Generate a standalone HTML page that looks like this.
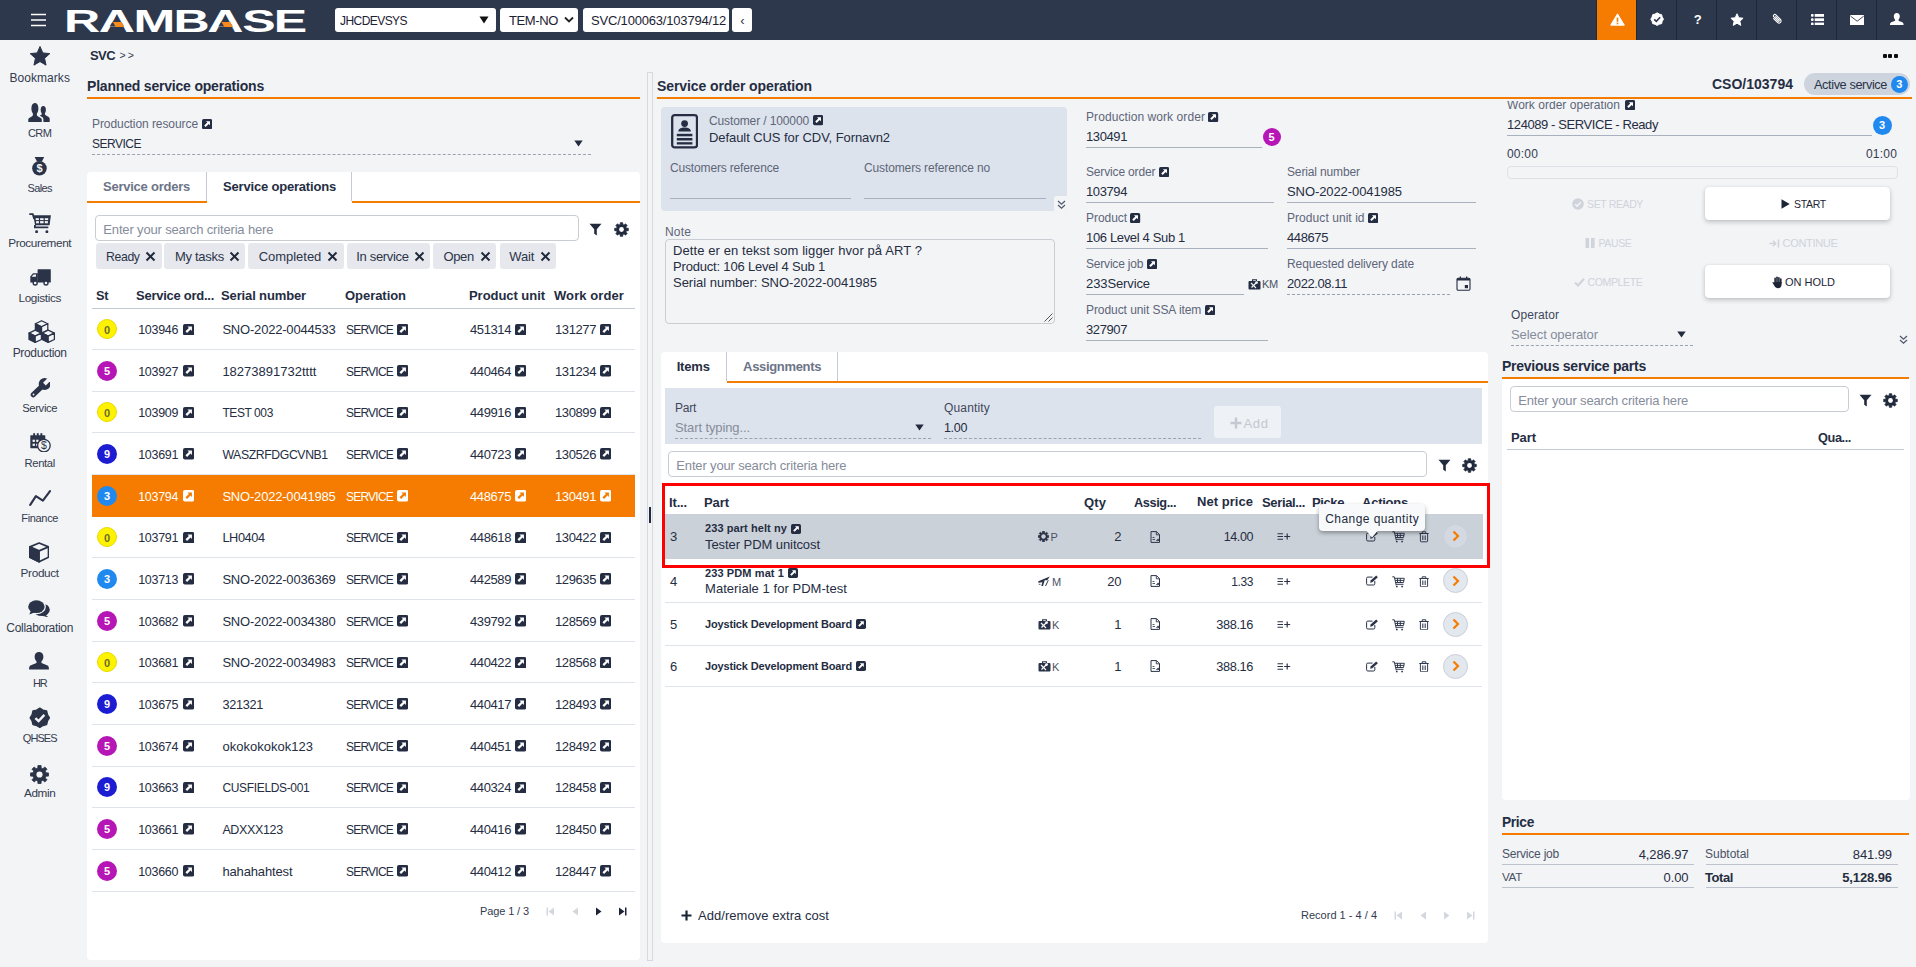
<!DOCTYPE html>
<html lang="en"><head><meta charset="utf-8"><title>RamBase - Service order operation</title>
<style>
html,body{margin:0;padding:0;}
body{width:1916px;height:967px;overflow:hidden;background:#f3f4f6;font-family:"Liberation Sans",sans-serif;position:relative;}
.b{position:absolute;display:block;}
.t{position:absolute;white-space:nowrap;}
.bd{text-align:center;font-weight:700;box-sizing:border-box;}
</style></head><body>
<div class="b " style="left:0px;top:0px;width:1916px;height:40px;background:#2e384d;"></div>
<svg class="b" style="left:30px;top:12px;" width="17" height="16" viewBox="0 0 17 16"><path d="M1 2.5H16M1 8H16M1 13.5H16" stroke="#fff" stroke-width="1.6" fill="none"/></svg>
<svg class="b" style="left:60px;top:0px;overflow:visible;" width="260" height="40" viewBox="0 0 260 40"><text transform="scale(1.645,1)" x="2.38 23.55 44.73 68.97 89.60 110.76 129.96" y="31.6" font-family="Liberation Sans, sans-serif" font-weight="700" font-size="30.5" fill="#fff">RAMBASE</text><polygon points="51.76,22.82 61.92,22.82 63.98,26.60 49.70,26.60" fill="#2e384d"/><polygon points="52.92,21.90 61.52,21.90 64.30,27.00 55.70,27.00" fill="#f78a1d"/><polygon points="160.41,22.82 170.57,22.82 172.63,26.60 158.35,26.60" fill="#2e384d"/><polygon points="161.57,21.90 170.17,21.90 172.95,27.00 164.35,27.00" fill="#f78a1d"/></svg>
<div class="b " style="left:335px;top:8px;width:160.5px;height:24px;background:#fff;border-radius:3px;"></div>
<div class="t " style="left:340.00px;top:12.000px;font-size:12px;line-height:18px;color:#1c2233;letter-spacing:-0.558px;">JHCDEVSYS</div>
<svg class="b" style="left:479px;top:16px;" width="10" height="8" viewBox="0 0 10 8"><path d="M0.5 0.5H9.5L5 7.5Z" fill="#111"/></svg>
<div class="b " style="left:499.5px;top:8px;width:78.5px;height:24px;background:#fff;border-radius:3px;"></div>
<div class="t " style="left:509.00px;top:11.000px;font-size:13px;line-height:19px;color:#1c2233;letter-spacing:-0.379px;">TEM-NO</div>
<svg class="b" style="left:564px;top:16px;" width="10" height="8" viewBox="0 0 10 8"><path d="M1 1.5L5 5.5L9 1.5" stroke="#222" stroke-width="1.8" fill="none"/></svg>
<div class="b " style="left:582.5px;top:8px;width:146px;height:24px;background:#fff;border-radius:3px;overflow:hidden;"></div>
<div class="t " style="left:591.00px;top:11.000px;font-size:13px;line-height:19px;color:#1c2233;letter-spacing:-0.189px;">SVC/100063/103794/12</div>
<div class="b " style="left:732.3px;top:8px;width:19.7px;height:24px;background:#fff;border-radius:3px;"></div>
<div class="t " style="left:740.19px;top:11.000px;font-size:13px;line-height:19px;color:#333;letter-spacing:-0.100px;">‹</div>
<div class="b " style="left:1596px;top:0px;width:1px;height:40px;background:#232a3b;"></div>
<div class="b " style="left:1597px;top:0px;width:39px;height:40px;background:#f57c00;"></div>
<div class="b " style="left:1636px;top:0px;width:1px;height:40px;background:#1f2637;"></div>
<div class="b " style="left:1676px;top:0px;width:1px;height:40px;background:#1f2637;"></div>
<div class="b " style="left:1716px;top:0px;width:1px;height:40px;background:#1f2637;"></div>
<div class="b " style="left:1756px;top:0px;width:1px;height:40px;background:#1f2637;"></div>
<div class="b " style="left:1796px;top:0px;width:1px;height:40px;background:#1f2637;"></div>
<div class="b " style="left:1836px;top:0px;width:1px;height:40px;background:#1f2637;"></div>
<div class="b " style="left:1876px;top:0px;width:1px;height:40px;background:#1f2637;"></div>
<svg class="b" style="left:1609.5px;top:12.5px;" width="15" height="13" viewBox="0 0 15 13"><path d="M7.500 1.300L14 12H1Z" fill="#fff" stroke="#fff" stroke-width="1.400" stroke-linejoin="round"/><rect x="6.700" y="4.600" width="1.600" height="4.200" fill="#f57c00"/><rect x="6.700" y="9.700" width="1.600" height="1.600" fill="#f57c00"/></svg>
<svg class="b" style="left:1649.9px;top:11.8px;" width="14.3" height="14.3" viewBox="0 0 18 18"><polygon points="9.00,1.00 11.64,2.63 14.66,3.34 15.37,6.36 17.00,9.00 15.37,11.64 14.66,14.66 11.64,15.37 9.00,17.00 6.36,15.37 3.34,14.66 2.63,11.64 1.00,9.00 2.63,6.36 3.34,3.34 6.36,2.63" fill="#fff" stroke="#fff" stroke-width="1.200" stroke-linejoin="round"/><path d="M5.300 9.200L8 11.800L12.800 6.600" stroke="#2e384d" stroke-width="2" fill="none"/></svg>
<div class="t " style="left:1693.73px;top:10.000px;font-size:13px;line-height:19px;color:#fff;letter-spacing:0.000px;font-weight:700;">?</div>
<svg class="b" style="left:1730px;top:12.8px;" width="14" height="13" viewBox="0 0 14 13"><polygon points="7.00,0.80 8.76,4.77 13.09,5.22 9.85,8.13 10.76,12.38 7.00,10.20 3.24,12.38 4.15,8.13 0.91,5.22 5.24,4.77" fill="#fff" stroke="#fff" stroke-width="1" stroke-linejoin="round"/></svg>
<svg class="b" style="left:1770.3px;top:12.4px;" width="14" height="14" viewBox="0 0 14 14"><g transform="rotate(-45 7 7)"><path d="M4.900 4.300V9.800a2.100 2.100 0 0 0 4.200 0V3.300a1.400 1.400 0 0 0-2.800 0V9.300a0.700 0.700 0 0 0 1.400 0V4.300" stroke="#fff" stroke-width="1.100" fill="none" stroke-linecap="round"/></g></svg>
<svg class="b" style="left:1810.6px;top:13.7px;" width="13.6" height="11.4" viewBox="0 0 13.6 11.4"><g fill="#fff"><rect x="0" y="0" width="2.600" height="2.800" rx="0.800"/><rect x="3.700" y="0" width="9.800" height="2.800"/><rect x="0" y="4.300" width="2.600" height="2.800" rx="0.800"/><rect x="3.700" y="4.300" width="9.800" height="2.800"/><rect x="0" y="8.600" width="2.600" height="2.800" rx="0.800"/><rect x="3.700" y="8.600" width="9.800" height="2.800"/></g></svg>
<svg class="b" style="left:1849.9px;top:14.8px;" width="14.3" height="10.2" viewBox="0 0 14.3 10.2"><rect x="0" y="0" width="14.300" height="10.200" rx="0.900" fill="#fff"/><path d="M0.600 1.200L7.150 6.200L13.700 1.200" stroke="#2e384d" stroke-width="0.900" fill="none"/></svg>
<svg class="b" style="left:1890.4px;top:12.9px;" width="13.6" height="12.4" viewBox="1.300 1.800 15.400 14"><path d="M9 1.8c2.2 0 3.4 1.6 3.4 3.8 0 1.6-.7 3-1.5 3.7v1c0 .5 3.8 1.5 5 2.4.6.5.8 1.400.8 3.100H1.300c0-1.700.2-2.600.8-3.100 1.200-.9 5-1.900 5-2.400v-1C6.300 8.600 5.600 7.200 5.600 5.600 5.600 3.400 6.800 1.800 9 1.800Z" fill="#fff"/></svg>
<div class="b " style="left:0px;top:40px;width:80px;height:927px;background:#f3f4f6;"></div>
<div class="t " style="left:9.45px;top:69.000px;font-size:12px;line-height:18px;color:#333b4f;letter-spacing:0.053px;">Bookmarks</div>
<div class="t " style="left:27.95px;top:125.000px;font-size:11px;line-height:16px;color:#333b4f;letter-spacing:-0.517px;">CRM</div>
<div class="t " style="left:27.40px;top:180.000px;font-size:11px;line-height:16px;color:#333b4f;letter-spacing:-0.583px;">Sales</div>
<div class="t " style="left:8.20px;top:234.000px;font-size:11.75px;line-height:17px;color:#333b4f;letter-spacing:-0.388px;">Procurement</div>
<div class="t " style="left:18.50px;top:289.000px;font-size:11.75px;line-height:17px;color:#333b4f;letter-spacing:-0.368px;">Logistics</div>
<div class="t " style="left:12.70px;top:344.000px;font-size:12px;line-height:18px;color:#333b4f;letter-spacing:-0.337px;">Production</div>
<div class="t " style="left:22.20px;top:400.000px;font-size:11.25px;line-height:16px;color:#333b4f;letter-spacing:-0.359px;">Service</div>
<div class="t " style="left:24.55px;top:455.000px;font-size:11.25px;line-height:16px;color:#333b4f;letter-spacing:-0.370px;">Rental</div>
<div class="t " style="left:21.30px;top:510.000px;font-size:11px;line-height:16px;color:#333b4f;letter-spacing:-0.334px;">Finance</div>
<div class="t " style="left:20.60px;top:564.000px;font-size:11.75px;line-height:17px;color:#333b4f;letter-spacing:-0.328px;">Product</div>
<div class="t " style="left:6.30px;top:619.000px;font-size:12px;line-height:18px;color:#333b4f;letter-spacing:-0.301px;">Collaboration</div>
<div class="t " style="left:32.90px;top:675.000px;font-size:11px;line-height:16px;color:#333b4f;letter-spacing:-1.144px;">HR</div>
<div class="t " style="left:22.80px;top:730.000px;font-size:11px;line-height:16px;color:#333b4f;letter-spacing:-0.942px;">QHSES</div>
<div class="t " style="left:24.00px;top:784.000px;font-size:11.75px;line-height:17px;color:#333b4f;letter-spacing:-0.381px;">Admin</div>
<svg class="b" style="left:27.5px;top:45px;" width="24" height="22" viewBox="0 0 24 22"><polygon points="12.00,1.50 14.82,7.92 21.80,8.62 16.57,13.28 18.05,20.13 12.00,16.60 5.95,20.13 7.43,13.28 2.20,8.62 9.18,7.92" fill="#2a3348" stroke="#2a3348" stroke-width="1" stroke-linejoin="round"/></svg>
<svg class="b" style="left:28.4px;top:102.5px;" width="22.2" height="19.6" viewBox="0 0 22.2 19.6"><g fill="#2a3348"><path d="M15.4 19.5V16C15.4 14.4 13.2 13.4 11.6 12.6 12.6 12.2 13.6 11.8 13.7 11.200V10.200C13 9.400 12.700 8.200 12.700 6.800 12.700 4.500 13.600 3 15.300 3 17 3 17.900 4.500 17.900 6.800 17.900 8.200 17.600 9.400 16.900 10.200V11.200C17.200 12.400 21.700 13.600 21.700 15.800V19.500Z"/><path d="M0.300 19.500V16.200C0.300 14.600 4.600 13.600 4.900 12.200V10.600C3.900 9.600 3.400 7.600 3.400 5.600 3.400 2.400 4.600 0 6.900 0 9.200 0 10.400 2.400 10.400 5.600 10.400 7.600 9.900 9.600 8.900 10.600V12.200C9.200 13.600 13.800 14.600 13.800 16.200V19.500Z"/></g></svg>
<svg class="b" style="left:32.2px;top:157.4px;" width="15" height="18.8" viewBox="0 0 15 18.8"><path d="M2.600 0.100H12.200L9.900 4.600H5Z" fill="#2a3348"/><circle cx="7.450" cy="11.300" r="7.300" fill="#2a3348"/><text x="7.450" y="15.300" text-anchor="middle" font-family="Liberation Sans, sans-serif" font-weight="700" font-size="11" fill="#f3f4f6">$</text></svg>
<svg class="b" style="left:28.6px;top:212.7px;" width="22.2" height="20.4" viewBox="0 0 22.2 20.4"><path d="M0.300 1.200H3.800L5.200 6" stroke="#2a3348" stroke-width="1.800" fill="none"/><path d="M4.200 2.300H21.900L20.600 12.300H6.100Z" fill="#2a3348"/><path d="M5.900 12V14.300H19.300" stroke="#2a3348" stroke-width="1.800" fill="none"/><g fill="#f3f4f6"><rect x="6.700" y="5.200" width="3.200" height="1.900"/><rect x="11.100" y="5.200" width="3.500" height="1.900"/><rect x="15.800" y="5.200" width="3.400" height="1.900"/><rect x="7.100" y="8.100" width="2.800" height="2.200"/><rect x="11.100" y="8.100" width="3.500" height="2.200"/><rect x="15.800" y="8.100" width="3.100" height="2.200"/></g><circle cx="7.600" cy="18.800" r="1.450" fill="#2a3348"/><circle cx="17.900" cy="18.800" r="1.450" fill="#2a3348"/></svg>
<svg class="b" style="left:29.6px;top:269px;" width="21.4" height="17" viewBox="0 0 21.4 17"><g fill="#2a3348"><rect x="7.600" y="0.200" width="13.200" height="13.300" rx="0.600"/><path d="M0.300 13.500V7.600L3 4.300H7.800V13.500Z"/><circle cx="5.200" cy="14" r="2.700"/><circle cx="16" cy="14" r="2.700"/></g><circle cx="5.200" cy="14" r="1.300" fill="#f3f4f6"/><circle cx="16" cy="14" r="1.300" fill="#f3f4f6"/><path d="M1.600 7.800L3.600 5.400H6V7.800Z" fill="#f3f4f6"/></svg>
<svg class="b" style="left:28.4px;top:320.4px;" width="27.4" height="23" viewBox="0 0 27.4 23"><path d="M13.6 0.748 L19.8 3.724 L13.6 6.7 L7.4 3.724Z" fill="#f3f4f6" stroke="#2a3348" stroke-width="1.250" stroke-linejoin="round"/><path d="M7.4 3.724 L13.6 6.7 L13.6 13.024 L7.4 10.048Z" fill="#2a3348" stroke="#2a3348" stroke-width="1.250" stroke-linejoin="round"/><path d="M19.8 3.724 L13.6 6.7 L13.6 13.024 L19.8 10.048Z" fill="#f3f4f6" stroke="#2a3348" stroke-width="1.250" stroke-linejoin="round"/><path d="M7.2 10.148 L13.4 13.124 L7.2 16.1 L1 13.124Z" fill="#f3f4f6" stroke="#2a3348" stroke-width="1.250" stroke-linejoin="round"/><path d="M1 13.124 L7.2 16.1 L7.2 22.424 L1 19.448Z" fill="#2a3348" stroke="#2a3348" stroke-width="1.250" stroke-linejoin="round"/><path d="M13.4 13.124 L7.2 16.1 L7.2 22.424 L13.4 19.448Z" fill="#f3f4f6" stroke="#2a3348" stroke-width="1.250" stroke-linejoin="round"/><path d="M20.2 10.148 L26.4 13.124 L20.2 16.1 L14 13.124Z" fill="#f3f4f6" stroke="#2a3348" stroke-width="1.250" stroke-linejoin="round"/><path d="M14 13.124 L20.2 16.1 L20.2 22.424 L14 19.448Z" fill="#2a3348" stroke="#2a3348" stroke-width="1.250" stroke-linejoin="round"/><path d="M26.4 13.124 L20.2 16.1 L20.2 22.424 L26.4 19.448Z" fill="#f3f4f6" stroke="#2a3348" stroke-width="1.250" stroke-linejoin="round"/></svg>
<svg class="b" style="left:29.6px;top:378px;" width="20.6" height="20" viewBox="0 0 20.6 20"><line x1="3.300" y1="16.700" x2="12.800" y2="7.700" stroke="#2a3348" stroke-width="5.200" stroke-linecap="round"/><circle cx="14.600" cy="6" r="5.900" fill="#2a3348"/><polygon points="13.050,4.670 15.830,7.450 20.990,2.290 18.210,-0.490" fill="#f3f4f6"/><circle cx="3.500" cy="16.500" r="0.900" fill="#f3f4f6"/></svg>
<svg class="b" style="left:29.6px;top:432.7px;" width="21" height="19.6" viewBox="0 0 21 19.6"><g fill="#2a3348"><rect x="0.300" y="2.200" width="15" height="13" rx="0.600"/><rect x="3.200" y="0.200" width="1.900" height="3.500"/><rect x="6.800" y="0.200" width="1.900" height="3.500"/><rect x="10.400" y="0.200" width="1.900" height="3.500"/></g><g fill="#f3f4f6"><rect x="2.600" y="6.700" width="2.300" height="2.200"/><rect x="6.200" y="6.700" width="2.300" height="2.200"/><rect x="2.600" y="10.700" width="2.300" height="2.200"/><rect x="6.200" y="10.700" width="2.300" height="2.200"/></g><circle cx="13.900" cy="12.600" r="6.300" fill="#f3f4f6" stroke="#2a3348" stroke-width="1.300"/><text x="13.900" y="16.300" text-anchor="middle" font-family="Liberation Sans, sans-serif" font-size="10.500" fill="#2a3348">$</text></svg>
<svg class="b" style="left:28.5px;top:490.2px;" width="22" height="16" viewBox="0 0 22 16"><path d="M1.200 14.900L6.900 6.100L13.900 10.700L21 1.100" stroke="#2a3348" stroke-width="2.100" fill="none" stroke-linecap="round" stroke-linejoin="round"/></svg>
<svg class="b" style="left:28.6px;top:542.4px;" width="20.4" height="20.8" viewBox="0 0 20.4 20.8"><path d="M10.100 1L19.500 4.900V15.200L10.100 19.800L0.900 15.200V4.900Z" fill="#f3f4f6" stroke="#2a3348" stroke-width="1.700" stroke-linejoin="round"/><path d="M0.900 4.900L10.100 8.900V19.800L0.900 15.200Z" fill="#2a3348" stroke="#2a3348" stroke-width="1.700" stroke-linejoin="round"/><path d="M10.100 8.900L19.500 4.900" stroke="#2a3348" stroke-width="1.700"/></svg>
<svg class="b" style="left:28.4px;top:599.5px;" width="22" height="17.8" viewBox="0 0 22 17.8"><g fill="#2a3348"><ellipse cx="13.700" cy="9.700" rx="8.100" ry="6.300"/><path d="M17 14.500L20.800 17.500L14.300 15.800Z"/></g><ellipse cx="8.400" cy="6.700" rx="9.500" ry="7.600" fill="#f3f4f6"/><g fill="#2a3348"><ellipse cx="8.400" cy="6.700" rx="8.200" ry="6.400"/><path d="M3 10.500L1.300 14.500L7 12.300Z"/></g></svg>
<svg class="b" style="left:29px;top:652px;" width="21.6" height="19.8" viewBox="0 0 21.6 19.8"><path transform="translate(-1.600,-2.300) scale(1.290,1.260)" d="M9 1.8c2.2 0 3.4 1.6 3.4 3.8 0 1.6-.7 3-1.5 3.7v1c0 .5 3.8 1.5 5 2.4.6.5.8 1.400.8 3.100H1.300c0-1.700.2-2.600.8-3.100 1.200-.9 5-1.900 5-2.400v-1C6.300 8.600 5.600 7.200 5.600 5.600 5.600 3.400 6.800 1.800 9 1.800Z" fill="#2a3348"/></svg>
<svg class="b" style="left:28.7px;top:706.8px;" width="21.6" height="21.6" viewBox="0 0 21.6 21.6"><g transform="scale(1.2)"><polygon points="9.00,1.00 11.64,2.63 14.66,3.34 15.37,6.36 17.00,9.00 15.37,11.64 14.66,14.66 11.64,15.37 9.00,17.00 6.36,15.37 3.34,14.66 2.63,11.64 1.00,9.00 2.63,6.36 3.34,3.34 6.36,2.63" fill="#2a3348" stroke="#2a3348" stroke-width="1.200" stroke-linejoin="round"/><path d="M5.300 9.200L8 11.800L12.800 6.600" stroke="#f3f4f6" stroke-width="2" fill="none"/></g></svg>
<svg class="b" style="left:30px;top:764.5px;" width="19" height="19" viewBox="0 0 19 19"><polygon points="7.92,0.44 11.08,0.44 11.17,3.01 12.91,3.73 14.79,1.97 17.03,4.21 15.27,6.09 15.99,7.83 18.56,7.92 18.56,11.08 15.99,11.17 15.27,12.91 17.03,14.79 14.79,17.03 12.91,15.27 11.17,15.99 11.08,18.56 7.92,18.56 7.83,15.99 6.09,15.27 4.21,17.03 1.97,14.79 3.73,12.91 3.01,11.17 0.44,11.08 0.44,7.92 3.01,7.83 3.73,6.09 1.97,4.21 4.21,1.97 6.09,3.73 7.83,3.01" fill="#2a3348" stroke="#2a3348" stroke-width="0.800" stroke-linejoin="round"/><circle cx="9.500" cy="9.500" r="3.100" fill="#f3f4f6"/></svg>
<div class="t " style="left:90.00px;top:46.000px;font-size:13px;line-height:19px;color:#252d42;letter-spacing:-0.577px;font-weight:700;">SVC</div>
<div class="t " style="left:119.50px;top:47.000px;font-size:10.5px;line-height:16px;color:#333b4f;letter-spacing:-0.394px;">&gt; &gt;</div>
<div class="t " style="left:87.00px;top:76.000px;font-size:14px;line-height:20px;color:#252d42;letter-spacing:-0.195px;font-weight:700;">Planned service operations</div>
<div class="b " style="left:87px;top:97px;width:553px;height:2px;background:#f57c00;"></div>
<div class="t " style="left:92.00px;top:115.000px;font-size:12px;line-height:18px;color:#5d6679;letter-spacing:-0.073px;">Production resource</div>
<svg class="b" style="left:201.8px;top:119.2px;" width="10.2" height="10.2" viewBox="0 0 12 12"><rect x="0" y="0" width="12" height="12" rx="2" fill="#252d42"/><path d="M4.700 2.600H9.400V7.300L7.900 5.800 4.300 9.400 2.600 7.700 6.200 4.100Z" fill="#fff"/></svg>
<div class="t " style="left:92.00px;top:135.000px;font-size:12px;line-height:18px;color:#252d42;letter-spacing:-0.495px;">SERVICE</div>
<svg class="b" style="left:574px;top:140px;" width="9" height="7" viewBox="0 0 9 7"><path d="M0.300 0.500H8.700L4.500 6.500Z" fill="#222b3d"/></svg>
<div class="b " style="left:92px;top:154px;width:499px;height:0px;border-top:1px dashed #9aa3b2;"></div>
<div class="b " style="left:87px;top:172px;width:553px;height:788px;background:#fff;border-radius:4px;"></div>
<div class="b " style="left:87px;top:201px;width:120px;height:2px;background:#f57c00;"></div>
<div class="b " style="left:352px;top:201px;width:288px;height:2px;background:#f57c00;"></div>
<div class="b " style="left:206px;top:172px;width:1px;height:29px;background:#c3cbd7;"></div>
<div class="b " style="left:351px;top:172px;width:1px;height:29px;background:#c3cbd7;"></div>
<div class="t " style="left:103.00px;top:177.000px;font-size:13px;line-height:19px;color:#6c7487;letter-spacing:-0.238px;font-weight:700;">Service orders</div>
<div class="t " style="left:223.00px;top:177.000px;font-size:13px;line-height:19px;color:#252d42;letter-spacing:-0.185px;font-weight:700;">Service operations</div>
<div class="b " style="left:95px;top:215px;width:484px;height:26px;background:#fff;border:1px solid #c8ccd3;border-radius:4px;box-sizing:border-box;"></div>
<div class="t " style="left:103.30px;top:220.000px;font-size:13px;line-height:19px;color:#858c9b;letter-spacing:-0.157px;">Enter your search criteria here</div>
<svg class="b" style="left:589.4px;top:222.9px;" width="13" height="13" viewBox="0 0 13 13"><path d="M0.500 0.800H12.500L7.800 6.300V12.500L5.200 10.800V6.300Z" fill="#222b3d"/></svg>
<svg class="b" style="left:613.7px;top:221.6px;" width="15" height="15" viewBox="0 0 15 15"><polygon points="6.31,0.70 8.69,0.70 8.77,2.56 10.10,3.11 11.47,1.85 13.15,3.53 11.89,4.90 12.44,6.23 14.30,6.31 14.30,8.69 12.44,8.77 11.89,10.10 13.15,11.47 11.47,13.15 10.10,11.89 8.77,12.44 8.69,14.30 6.31,14.30 6.23,12.44 4.90,11.89 3.53,13.15 1.85,11.47 3.11,10.10 2.56,8.77 0.70,8.69 0.70,6.31 2.56,6.23 3.11,4.90 1.85,3.53 3.53,1.85 4.90,3.11 6.23,2.56" fill="#222b3d" stroke="#222b3d" stroke-width="0.800" stroke-linejoin="round"/><circle cx="7.5" cy="7.5" r="2.400" fill="#fff"/></svg>
<div class="b " style="left:96px;top:243.2px;width:65.5px;height:25.5px;background:#e6e8ed;border-radius:3px;"></div>
<div class="t " style="left:106.10px;top:248.000px;font-size:12.25px;line-height:18px;color:#2c3449;letter-spacing:-0.382px;">Ready</div>
<svg class="b" style="left:144.8px;top:250.8px;" width="11" height="11" viewBox="0 0 11 11"><path d="M1.500 1.500L9.500 9.500M9.500 1.500L1.500 9.500" stroke="#222b3d" stroke-width="2"/></svg>
<div class="b " style="left:164.2px;top:243.2px;width:81.1px;height:25.5px;background:#e6e8ed;border-radius:3px;"></div>
<div class="t " style="left:174.90px;top:247.000px;font-size:13px;line-height:19px;color:#2c3449;letter-spacing:-0.273px;">My tasks</div>
<svg class="b" style="left:228.6px;top:250.8px;" width="11" height="11" viewBox="0 0 11 11"><path d="M1.500 1.500L9.500 9.500M9.500 1.500L1.500 9.500" stroke="#222b3d" stroke-width="2"/></svg>
<div class="b " style="left:248.3px;top:243.2px;width:95.3px;height:25.5px;background:#e6e8ed;border-radius:3px;"></div>
<div class="t " style="left:258.70px;top:247.000px;font-size:13px;line-height:19px;color:#2c3449;letter-spacing:-0.030px;">Completed</div>
<svg class="b" style="left:326.9px;top:250.8px;" width="11" height="11" viewBox="0 0 11 11"><path d="M1.500 1.500L9.500 9.500M9.500 1.500L1.500 9.500" stroke="#222b3d" stroke-width="2"/></svg>
<div class="b " style="left:346.6px;top:243.2px;width:83.7px;height:25.5px;background:#e6e8ed;border-radius:3px;"></div>
<div class="t " style="left:356.20px;top:247.000px;font-size:13px;line-height:19px;color:#2c3449;letter-spacing:-0.313px;">In service</div>
<svg class="b" style="left:413.6px;top:250.8px;" width="11" height="11" viewBox="0 0 11 11"><path d="M1.500 1.500L9.500 9.500M9.500 1.500L1.500 9.500" stroke="#222b3d" stroke-width="2"/></svg>
<div class="b " style="left:433.3px;top:243.2px;width:62.9px;height:25.5px;background:#e6e8ed;border-radius:3px;"></div>
<div class="t " style="left:443.40px;top:247.000px;font-size:13px;line-height:19px;color:#2c3449;letter-spacing:-0.326px;">Open</div>
<svg class="b" style="left:479.5px;top:250.8px;" width="11" height="11" viewBox="0 0 11 11"><path d="M1.500 1.500L9.500 9.500M9.500 1.500L1.500 9.500" stroke="#222b3d" stroke-width="2"/></svg>
<div class="b " style="left:499.6px;top:243.2px;width:56.6px;height:25.5px;background:#e6e8ed;border-radius:3px;"></div>
<div class="t " style="left:509.30px;top:247.000px;font-size:13px;line-height:19px;color:#2c3449;letter-spacing:-0.154px;">Wait</div>
<svg class="b" style="left:539.5px;top:250.8px;" width="11" height="11" viewBox="0 0 11 11"><path d="M1.500 1.500L9.500 9.500M9.500 1.500L1.500 9.500" stroke="#222b3d" stroke-width="2"/></svg>
<div class="t " style="left:96.00px;top:286.000px;font-size:12.75px;line-height:19px;color:#252d42;letter-spacing:-0.375px;font-weight:700;">St</div>
<div class="t " style="left:136.00px;top:286.000px;font-size:13px;line-height:19px;color:#252d42;letter-spacing:-0.261px;font-weight:700;">Service ord...</div>
<div class="t " style="left:221.00px;top:286.000px;font-size:13px;line-height:19px;color:#252d42;letter-spacing:-0.131px;font-weight:700;">Serial number</div>
<div class="t " style="left:345.00px;top:286.000px;font-size:13px;line-height:19px;color:#252d42;letter-spacing:-0.044px;font-weight:700;">Operation</div>
<div class="t " style="left:469.00px;top:286.000px;font-size:13px;line-height:19px;color:#252d42;letter-spacing:-0.046px;font-weight:700;">Product unit</div>
<div class="t " style="left:554.00px;top:286.000px;font-size:13px;line-height:19px;color:#252d42;letter-spacing:0.089px;font-weight:700;">Work order</div>
<div class="b " style="left:92px;top:308px;width:543px;height:1px;background:#c3cad5;"></div>
<div class="b " style="left:92px;top:349px;width:543px;height:1px;background:#dfe3ea;"></div>
<div class="b bd" style="left:97px;top:319px;width:20px;height:20px;border-radius:50%;background:#fff200;color:#6b6b3a;font-size:11px;line-height:20px;border:1px solid #e6da00;">0</div>
<div class="t " style="left:138.20px;top:321.000px;font-size:12.5px;line-height:18px;color:#252d42;letter-spacing:-0.285px;">103946</div>
<svg class="b" style="left:182.6px;top:323.8px;" width="11.4" height="11.4" viewBox="0 0 12 12"><rect x="0" y="0" width="12" height="12" rx="2" fill="#252d42"/><path d="M4.700 2.600H9.400V7.300L7.900 5.800 4.300 9.400 2.600 7.700 6.200 4.100Z" fill="#fff"/></svg>
<div class="t " style="left:222.40px;top:320.000px;font-size:13px;line-height:19px;color:#252d42;letter-spacing:-0.198px;">SNO-2022-0044533</div>
<div class="t " style="left:346.00px;top:321.000px;font-size:12px;line-height:18px;color:#252d42;letter-spacing:-0.781px;">SERVICE</div>
<svg class="b" style="left:397px;top:323.8px;" width="11.4" height="11.4" viewBox="0 0 12 12"><rect x="0" y="0" width="12" height="12" rx="2" fill="#252d42"/><path d="M4.700 2.600H9.400V7.300L7.900 5.800 4.300 9.400 2.600 7.700 6.200 4.100Z" fill="#fff"/></svg>
<div class="t " style="left:470.00px;top:320.000px;font-size:13px;line-height:19px;color:#252d42;letter-spacing:-0.397px;">451314</div>
<svg class="b" style="left:515px;top:323.8px;" width="11.4" height="11.4" viewBox="0 0 12 12"><rect x="0" y="0" width="12" height="12" rx="2" fill="#252d42"/><path d="M4.700 2.600H9.400V7.300L7.900 5.800 4.300 9.400 2.600 7.700 6.200 4.100Z" fill="#fff"/></svg>
<div class="t " style="left:555.00px;top:320.000px;font-size:13px;line-height:19px;color:#252d42;letter-spacing:-0.397px;">131277</div>
<svg class="b" style="left:600px;top:323.8px;" width="11.4" height="11.4" viewBox="0 0 12 12"><rect x="0" y="0" width="12" height="12" rx="2" fill="#252d42"/><path d="M4.700 2.600H9.400V7.300L7.900 5.800 4.300 9.400 2.600 7.700 6.200 4.100Z" fill="#fff"/></svg>
<div class="b " style="left:92px;top:391px;width:543px;height:1px;background:#dfe3ea;"></div>
<div class="b bd" style="left:97px;top:360.5px;width:20px;height:20px;border-radius:50%;background:#b516b5;color:#fff;font-size:11px;line-height:20px;">5</div>
<div class="t " style="left:138.20px;top:363.000px;font-size:12.5px;line-height:18px;color:#252d42;letter-spacing:-0.285px;">103927</div>
<svg class="b" style="left:182.6px;top:365.3px;" width="11.4" height="11.4" viewBox="0 0 12 12"><rect x="0" y="0" width="12" height="12" rx="2" fill="#252d42"/><path d="M4.700 2.600H9.400V7.300L7.900 5.800 4.300 9.400 2.600 7.700 6.200 4.100Z" fill="#fff"/></svg>
<div class="t " style="left:222.40px;top:362.000px;font-size:13px;line-height:19px;color:#252d42;letter-spacing:0.001px;">18273891732tttt</div>
<div class="t " style="left:346.00px;top:363.000px;font-size:12px;line-height:18px;color:#252d42;letter-spacing:-0.781px;">SERVICE</div>
<svg class="b" style="left:397px;top:365.3px;" width="11.4" height="11.4" viewBox="0 0 12 12"><rect x="0" y="0" width="12" height="12" rx="2" fill="#252d42"/><path d="M4.700 2.600H9.400V7.300L7.900 5.800 4.300 9.400 2.600 7.700 6.200 4.100Z" fill="#fff"/></svg>
<div class="t " style="left:470.00px;top:362.000px;font-size:13px;line-height:19px;color:#252d42;letter-spacing:-0.397px;">440464</div>
<svg class="b" style="left:515px;top:365.3px;" width="11.4" height="11.4" viewBox="0 0 12 12"><rect x="0" y="0" width="12" height="12" rx="2" fill="#252d42"/><path d="M4.700 2.600H9.400V7.300L7.900 5.800 4.300 9.400 2.600 7.700 6.200 4.100Z" fill="#fff"/></svg>
<div class="t " style="left:555.00px;top:362.000px;font-size:13px;line-height:19px;color:#252d42;letter-spacing:-0.397px;">131234</div>
<svg class="b" style="left:600px;top:365.3px;" width="11.4" height="11.4" viewBox="0 0 12 12"><rect x="0" y="0" width="12" height="12" rx="2" fill="#252d42"/><path d="M4.700 2.600H9.400V7.300L7.900 5.800 4.300 9.400 2.600 7.700 6.200 4.100Z" fill="#fff"/></svg>
<div class="b " style="left:92px;top:432px;width:543px;height:1px;background:#dfe3ea;"></div>
<div class="b bd" style="left:97px;top:402px;width:20px;height:20px;border-radius:50%;background:#fff200;color:#6b6b3a;font-size:11px;line-height:20px;border:1px solid #e6da00;">0</div>
<div class="t " style="left:138.20px;top:404.000px;font-size:12.5px;line-height:18px;color:#252d42;letter-spacing:-0.285px;">103909</div>
<svg class="b" style="left:182.6px;top:406.8px;" width="11.4" height="11.4" viewBox="0 0 12 12"><rect x="0" y="0" width="12" height="12" rx="2" fill="#252d42"/><path d="M4.700 2.600H9.400V7.300L7.900 5.800 4.300 9.400 2.600 7.700 6.200 4.100Z" fill="#fff"/></svg>
<div class="t " style="left:222.40px;top:404.000px;font-size:12px;line-height:18px;color:#252d42;letter-spacing:-0.414px;">TEST 003</div>
<div class="t " style="left:346.00px;top:404.000px;font-size:12px;line-height:18px;color:#252d42;letter-spacing:-0.781px;">SERVICE</div>
<svg class="b" style="left:397px;top:406.8px;" width="11.4" height="11.4" viewBox="0 0 12 12"><rect x="0" y="0" width="12" height="12" rx="2" fill="#252d42"/><path d="M4.700 2.600H9.400V7.300L7.900 5.800 4.300 9.400 2.600 7.700 6.200 4.100Z" fill="#fff"/></svg>
<div class="t " style="left:470.00px;top:403.000px;font-size:13px;line-height:19px;color:#252d42;letter-spacing:-0.397px;">449916</div>
<svg class="b" style="left:515px;top:406.8px;" width="11.4" height="11.4" viewBox="0 0 12 12"><rect x="0" y="0" width="12" height="12" rx="2" fill="#252d42"/><path d="M4.700 2.600H9.400V7.300L7.900 5.800 4.300 9.400 2.600 7.700 6.200 4.100Z" fill="#fff"/></svg>
<div class="t " style="left:555.00px;top:403.000px;font-size:13px;line-height:19px;color:#252d42;letter-spacing:-0.397px;">130899</div>
<svg class="b" style="left:600px;top:406.8px;" width="11.4" height="11.4" viewBox="0 0 12 12"><rect x="0" y="0" width="12" height="12" rx="2" fill="#252d42"/><path d="M4.700 2.600H9.400V7.300L7.900 5.800 4.300 9.400 2.600 7.700 6.200 4.100Z" fill="#fff"/></svg>
<div class="b " style="left:92px;top:474px;width:543px;height:1px;background:#dfe3ea;"></div>
<div class="b bd" style="left:97px;top:443.5px;width:20px;height:20px;border-radius:50%;background:#1c1cd2;color:#fff;font-size:11px;line-height:20px;">9</div>
<div class="t " style="left:138.20px;top:446.000px;font-size:12.5px;line-height:18px;color:#252d42;letter-spacing:-0.285px;">103691</div>
<svg class="b" style="left:182.6px;top:448.3px;" width="11.4" height="11.4" viewBox="0 0 12 12"><rect x="0" y="0" width="12" height="12" rx="2" fill="#252d42"/><path d="M4.700 2.600H9.400V7.300L7.900 5.800 4.300 9.400 2.600 7.700 6.200 4.100Z" fill="#fff"/></svg>
<div class="t " style="left:222.40px;top:446.000px;font-size:12.25px;line-height:18px;color:#252d42;letter-spacing:-0.391px;">WASZRFDGCVNB1</div>
<div class="t " style="left:346.00px;top:446.000px;font-size:12px;line-height:18px;color:#252d42;letter-spacing:-0.781px;">SERVICE</div>
<svg class="b" style="left:397px;top:448.3px;" width="11.4" height="11.4" viewBox="0 0 12 12"><rect x="0" y="0" width="12" height="12" rx="2" fill="#252d42"/><path d="M4.700 2.600H9.400V7.300L7.900 5.800 4.300 9.400 2.600 7.700 6.200 4.100Z" fill="#fff"/></svg>
<div class="t " style="left:470.00px;top:445.000px;font-size:13px;line-height:19px;color:#252d42;letter-spacing:-0.397px;">440723</div>
<svg class="b" style="left:515px;top:448.3px;" width="11.4" height="11.4" viewBox="0 0 12 12"><rect x="0" y="0" width="12" height="12" rx="2" fill="#252d42"/><path d="M4.700 2.600H9.400V7.300L7.900 5.800 4.300 9.400 2.600 7.700 6.200 4.100Z" fill="#fff"/></svg>
<div class="t " style="left:555.00px;top:445.000px;font-size:13px;line-height:19px;color:#252d42;letter-spacing:-0.397px;">130526</div>
<svg class="b" style="left:600px;top:448.3px;" width="11.4" height="11.4" viewBox="0 0 12 12"><rect x="0" y="0" width="12" height="12" rx="2" fill="#252d42"/><path d="M4.700 2.600H9.400V7.300L7.900 5.800 4.300 9.400 2.600 7.700 6.200 4.100Z" fill="#fff"/></svg>
<div class="b " style="left:92px;top:475px;width:543px;height:41.6px;background:#f57c00;"></div>
<div class="b bd" style="left:97px;top:485.5px;width:20px;height:20px;border-radius:50%;background:#2089ef;color:#fff;font-size:11px;line-height:20px;">3</div>
<div class="t " style="left:138.20px;top:488.000px;font-size:12.5px;line-height:18px;color:#fff;letter-spacing:-0.285px;">103794</div>
<svg class="b" style="left:182.6px;top:490.3px;" width="11.4" height="11.4" viewBox="0 0 12 12"><rect x="0" y="0" width="12" height="12" rx="2" fill="#fff"/><path d="M4.700 2.600H9.400V7.300L7.900 5.800 4.300 9.400 2.600 7.700 6.200 4.100Z" fill="#f57c00"/></svg>
<div class="t " style="left:222.40px;top:487.000px;font-size:13px;line-height:19px;color:#fff;letter-spacing:-0.198px;">SNO-2022-0041985</div>
<div class="t " style="left:346.00px;top:488.000px;font-size:12px;line-height:18px;color:#fff;letter-spacing:-0.781px;">SERVICE</div>
<svg class="b" style="left:397px;top:490.3px;" width="11.4" height="11.4" viewBox="0 0 12 12"><rect x="0" y="0" width="12" height="12" rx="2" fill="#fff"/><path d="M4.700 2.600H9.400V7.300L7.900 5.800 4.300 9.400 2.600 7.700 6.200 4.100Z" fill="#f57c00"/></svg>
<div class="t " style="left:470.00px;top:487.000px;font-size:13px;line-height:19px;color:#fff;letter-spacing:-0.397px;">448675</div>
<svg class="b" style="left:515px;top:490.3px;" width="11.4" height="11.4" viewBox="0 0 12 12"><rect x="0" y="0" width="12" height="12" rx="2" fill="#fff"/><path d="M4.700 2.600H9.400V7.300L7.900 5.800 4.300 9.400 2.600 7.700 6.200 4.100Z" fill="#f57c00"/></svg>
<div class="t " style="left:555.00px;top:487.000px;font-size:13px;line-height:19px;color:#fff;letter-spacing:-0.397px;">130491</div>
<svg class="b" style="left:600px;top:490.3px;" width="11.4" height="11.4" viewBox="0 0 12 12"><rect x="0" y="0" width="12" height="12" rx="2" fill="#fff"/><path d="M4.700 2.600H9.400V7.300L7.900 5.800 4.300 9.400 2.600 7.700 6.200 4.100Z" fill="#f57c00"/></svg>
<div class="b " style="left:92px;top:557px;width:543px;height:1px;background:#dfe3ea;"></div>
<div class="b bd" style="left:97px;top:527px;width:20px;height:20px;border-radius:50%;background:#fff200;color:#6b6b3a;font-size:11px;line-height:20px;border:1px solid #e6da00;">0</div>
<div class="t " style="left:138.20px;top:529.000px;font-size:12.5px;line-height:18px;color:#252d42;letter-spacing:-0.285px;">103791</div>
<svg class="b" style="left:182.6px;top:531.8px;" width="11.4" height="11.4" viewBox="0 0 12 12"><rect x="0" y="0" width="12" height="12" rx="2" fill="#252d42"/><path d="M4.700 2.600H9.400V7.300L7.900 5.800 4.300 9.400 2.600 7.700 6.200 4.100Z" fill="#fff"/></svg>
<div class="t " style="left:222.40px;top:528.000px;font-size:12.75px;line-height:19px;color:#252d42;letter-spacing:-0.394px;">LH0404</div>
<div class="t " style="left:346.00px;top:529.000px;font-size:12px;line-height:18px;color:#252d42;letter-spacing:-0.781px;">SERVICE</div>
<svg class="b" style="left:397px;top:531.8px;" width="11.4" height="11.4" viewBox="0 0 12 12"><rect x="0" y="0" width="12" height="12" rx="2" fill="#252d42"/><path d="M4.700 2.600H9.400V7.300L7.900 5.800 4.300 9.400 2.600 7.700 6.200 4.100Z" fill="#fff"/></svg>
<div class="t " style="left:470.00px;top:528.000px;font-size:13px;line-height:19px;color:#252d42;letter-spacing:-0.397px;">448618</div>
<svg class="b" style="left:515px;top:531.8px;" width="11.4" height="11.4" viewBox="0 0 12 12"><rect x="0" y="0" width="12" height="12" rx="2" fill="#252d42"/><path d="M4.700 2.600H9.400V7.300L7.900 5.800 4.300 9.400 2.600 7.700 6.200 4.100Z" fill="#fff"/></svg>
<div class="t " style="left:555.00px;top:528.000px;font-size:13px;line-height:19px;color:#252d42;letter-spacing:-0.397px;">130422</div>
<svg class="b" style="left:600px;top:531.8px;" width="11.4" height="11.4" viewBox="0 0 12 12"><rect x="0" y="0" width="12" height="12" rx="2" fill="#252d42"/><path d="M4.700 2.600H9.400V7.300L7.900 5.800 4.300 9.400 2.600 7.700 6.200 4.100Z" fill="#fff"/></svg>
<div class="b " style="left:92px;top:599px;width:543px;height:1px;background:#dfe3ea;"></div>
<div class="b bd" style="left:97px;top:568.5px;width:20px;height:20px;border-radius:50%;background:#2089ef;color:#fff;font-size:11px;line-height:20px;">3</div>
<div class="t " style="left:138.20px;top:571.000px;font-size:12.5px;line-height:18px;color:#252d42;letter-spacing:-0.285px;">103713</div>
<svg class="b" style="left:182.6px;top:573.3px;" width="11.4" height="11.4" viewBox="0 0 12 12"><rect x="0" y="0" width="12" height="12" rx="2" fill="#252d42"/><path d="M4.700 2.600H9.400V7.300L7.900 5.800 4.300 9.400 2.600 7.700 6.200 4.100Z" fill="#fff"/></svg>
<div class="t " style="left:222.40px;top:570.000px;font-size:13px;line-height:19px;color:#252d42;letter-spacing:-0.198px;">SNO-2022-0036369</div>
<div class="t " style="left:346.00px;top:571.000px;font-size:12px;line-height:18px;color:#252d42;letter-spacing:-0.781px;">SERVICE</div>
<svg class="b" style="left:397px;top:573.3px;" width="11.4" height="11.4" viewBox="0 0 12 12"><rect x="0" y="0" width="12" height="12" rx="2" fill="#252d42"/><path d="M4.700 2.600H9.400V7.300L7.900 5.800 4.300 9.400 2.600 7.700 6.200 4.100Z" fill="#fff"/></svg>
<div class="t " style="left:470.00px;top:570.000px;font-size:13px;line-height:19px;color:#252d42;letter-spacing:-0.397px;">442589</div>
<svg class="b" style="left:515px;top:573.3px;" width="11.4" height="11.4" viewBox="0 0 12 12"><rect x="0" y="0" width="12" height="12" rx="2" fill="#252d42"/><path d="M4.700 2.600H9.400V7.300L7.900 5.800 4.300 9.400 2.600 7.700 6.200 4.100Z" fill="#fff"/></svg>
<div class="t " style="left:555.00px;top:570.000px;font-size:13px;line-height:19px;color:#252d42;letter-spacing:-0.397px;">129635</div>
<svg class="b" style="left:600px;top:573.3px;" width="11.4" height="11.4" viewBox="0 0 12 12"><rect x="0" y="0" width="12" height="12" rx="2" fill="#252d42"/><path d="M4.700 2.600H9.400V7.300L7.900 5.800 4.300 9.400 2.600 7.700 6.200 4.100Z" fill="#fff"/></svg>
<div class="b " style="left:92px;top:641px;width:543px;height:1px;background:#dfe3ea;"></div>
<div class="b bd" style="left:97px;top:610.5px;width:20px;height:20px;border-radius:50%;background:#b516b5;color:#fff;font-size:11px;line-height:20px;">5</div>
<div class="t " style="left:138.20px;top:613.000px;font-size:12.5px;line-height:18px;color:#252d42;letter-spacing:-0.285px;">103682</div>
<svg class="b" style="left:182.6px;top:615.3px;" width="11.4" height="11.4" viewBox="0 0 12 12"><rect x="0" y="0" width="12" height="12" rx="2" fill="#252d42"/><path d="M4.700 2.600H9.400V7.300L7.900 5.800 4.300 9.400 2.600 7.700 6.200 4.100Z" fill="#fff"/></svg>
<div class="t " style="left:222.40px;top:612.000px;font-size:13px;line-height:19px;color:#252d42;letter-spacing:-0.198px;">SNO-2022-0034380</div>
<div class="t " style="left:346.00px;top:613.000px;font-size:12px;line-height:18px;color:#252d42;letter-spacing:-0.781px;">SERVICE</div>
<svg class="b" style="left:397px;top:615.3px;" width="11.4" height="11.4" viewBox="0 0 12 12"><rect x="0" y="0" width="12" height="12" rx="2" fill="#252d42"/><path d="M4.700 2.600H9.400V7.300L7.900 5.800 4.300 9.400 2.600 7.700 6.200 4.100Z" fill="#fff"/></svg>
<div class="t " style="left:470.00px;top:612.000px;font-size:13px;line-height:19px;color:#252d42;letter-spacing:-0.397px;">439792</div>
<svg class="b" style="left:515px;top:615.3px;" width="11.4" height="11.4" viewBox="0 0 12 12"><rect x="0" y="0" width="12" height="12" rx="2" fill="#252d42"/><path d="M4.700 2.600H9.400V7.300L7.900 5.800 4.300 9.400 2.600 7.700 6.200 4.100Z" fill="#fff"/></svg>
<div class="t " style="left:555.00px;top:612.000px;font-size:13px;line-height:19px;color:#252d42;letter-spacing:-0.397px;">128569</div>
<svg class="b" style="left:600px;top:615.3px;" width="11.4" height="11.4" viewBox="0 0 12 12"><rect x="0" y="0" width="12" height="12" rx="2" fill="#252d42"/><path d="M4.700 2.600H9.400V7.300L7.900 5.800 4.300 9.400 2.600 7.700 6.200 4.100Z" fill="#fff"/></svg>
<div class="b " style="left:92px;top:682px;width:543px;height:1px;background:#dfe3ea;"></div>
<div class="b bd" style="left:97px;top:652px;width:20px;height:20px;border-radius:50%;background:#fff200;color:#6b6b3a;font-size:11px;line-height:20px;border:1px solid #e6da00;">0</div>
<div class="t " style="left:138.20px;top:654.000px;font-size:12.5px;line-height:18px;color:#252d42;letter-spacing:-0.285px;">103681</div>
<svg class="b" style="left:182.6px;top:656.8px;" width="11.4" height="11.4" viewBox="0 0 12 12"><rect x="0" y="0" width="12" height="12" rx="2" fill="#252d42"/><path d="M4.700 2.600H9.400V7.300L7.900 5.800 4.300 9.400 2.600 7.700 6.200 4.100Z" fill="#fff"/></svg>
<div class="t " style="left:222.40px;top:653.000px;font-size:13px;line-height:19px;color:#252d42;letter-spacing:-0.198px;">SNO-2022-0034983</div>
<div class="t " style="left:346.00px;top:654.000px;font-size:12px;line-height:18px;color:#252d42;letter-spacing:-0.781px;">SERVICE</div>
<svg class="b" style="left:397px;top:656.8px;" width="11.4" height="11.4" viewBox="0 0 12 12"><rect x="0" y="0" width="12" height="12" rx="2" fill="#252d42"/><path d="M4.700 2.600H9.400V7.300L7.900 5.800 4.300 9.400 2.600 7.700 6.200 4.100Z" fill="#fff"/></svg>
<div class="t " style="left:470.00px;top:653.000px;font-size:13px;line-height:19px;color:#252d42;letter-spacing:-0.397px;">440422</div>
<svg class="b" style="left:515px;top:656.8px;" width="11.4" height="11.4" viewBox="0 0 12 12"><rect x="0" y="0" width="12" height="12" rx="2" fill="#252d42"/><path d="M4.700 2.600H9.400V7.300L7.900 5.800 4.300 9.400 2.600 7.700 6.200 4.100Z" fill="#fff"/></svg>
<div class="t " style="left:555.00px;top:653.000px;font-size:13px;line-height:19px;color:#252d42;letter-spacing:-0.397px;">128568</div>
<svg class="b" style="left:600px;top:656.8px;" width="11.4" height="11.4" viewBox="0 0 12 12"><rect x="0" y="0" width="12" height="12" rx="2" fill="#252d42"/><path d="M4.700 2.600H9.400V7.300L7.900 5.800 4.300 9.400 2.600 7.700 6.200 4.100Z" fill="#fff"/></svg>
<div class="b " style="left:92px;top:724px;width:543px;height:1px;background:#dfe3ea;"></div>
<div class="b bd" style="left:97px;top:693.5px;width:20px;height:20px;border-radius:50%;background:#1c1cd2;color:#fff;font-size:11px;line-height:20px;">9</div>
<div class="t " style="left:138.20px;top:696.000px;font-size:12.5px;line-height:18px;color:#252d42;letter-spacing:-0.285px;">103675</div>
<svg class="b" style="left:182.6px;top:698.3px;" width="11.4" height="11.4" viewBox="0 0 12 12"><rect x="0" y="0" width="12" height="12" rx="2" fill="#252d42"/><path d="M4.700 2.600H9.400V7.300L7.900 5.800 4.300 9.400 2.600 7.700 6.200 4.100Z" fill="#fff"/></svg>
<div class="t " style="left:222.40px;top:695.000px;font-size:12.75px;line-height:19px;color:#252d42;letter-spacing:-0.341px;">321321</div>
<div class="t " style="left:346.00px;top:696.000px;font-size:12px;line-height:18px;color:#252d42;letter-spacing:-0.781px;">SERVICE</div>
<svg class="b" style="left:397px;top:698.3px;" width="11.4" height="11.4" viewBox="0 0 12 12"><rect x="0" y="0" width="12" height="12" rx="2" fill="#252d42"/><path d="M4.700 2.600H9.400V7.300L7.900 5.800 4.300 9.400 2.600 7.700 6.200 4.100Z" fill="#fff"/></svg>
<div class="t " style="left:470.00px;top:695.000px;font-size:13px;line-height:19px;color:#252d42;letter-spacing:-0.397px;">440417</div>
<svg class="b" style="left:515px;top:698.3px;" width="11.4" height="11.4" viewBox="0 0 12 12"><rect x="0" y="0" width="12" height="12" rx="2" fill="#252d42"/><path d="M4.700 2.600H9.400V7.300L7.900 5.800 4.300 9.400 2.600 7.700 6.200 4.100Z" fill="#fff"/></svg>
<div class="t " style="left:555.00px;top:695.000px;font-size:13px;line-height:19px;color:#252d42;letter-spacing:-0.397px;">128493</div>
<svg class="b" style="left:600px;top:698.3px;" width="11.4" height="11.4" viewBox="0 0 12 12"><rect x="0" y="0" width="12" height="12" rx="2" fill="#252d42"/><path d="M4.700 2.600H9.400V7.300L7.900 5.800 4.300 9.400 2.600 7.700 6.200 4.100Z" fill="#fff"/></svg>
<div class="b " style="left:92px;top:766px;width:543px;height:1px;background:#dfe3ea;"></div>
<div class="b bd" style="left:97px;top:735.5px;width:20px;height:20px;border-radius:50%;background:#b516b5;color:#fff;font-size:11px;line-height:20px;">5</div>
<div class="t " style="left:138.20px;top:738.000px;font-size:12.5px;line-height:18px;color:#252d42;letter-spacing:-0.285px;">103674</div>
<svg class="b" style="left:182.6px;top:740.3px;" width="11.4" height="11.4" viewBox="0 0 12 12"><rect x="0" y="0" width="12" height="12" rx="2" fill="#252d42"/><path d="M4.700 2.600H9.400V7.300L7.900 5.800 4.300 9.400 2.600 7.700 6.200 4.100Z" fill="#fff"/></svg>
<div class="t " style="left:222.40px;top:737.000px;font-size:13px;line-height:19px;color:#252d42;letter-spacing:0.028px;">okokokokok123</div>
<div class="t " style="left:346.00px;top:738.000px;font-size:12px;line-height:18px;color:#252d42;letter-spacing:-0.781px;">SERVICE</div>
<svg class="b" style="left:397px;top:740.3px;" width="11.4" height="11.4" viewBox="0 0 12 12"><rect x="0" y="0" width="12" height="12" rx="2" fill="#252d42"/><path d="M4.700 2.600H9.400V7.300L7.900 5.800 4.300 9.400 2.600 7.700 6.200 4.100Z" fill="#fff"/></svg>
<div class="t " style="left:470.00px;top:737.000px;font-size:13px;line-height:19px;color:#252d42;letter-spacing:-0.397px;">440451</div>
<svg class="b" style="left:515px;top:740.3px;" width="11.4" height="11.4" viewBox="0 0 12 12"><rect x="0" y="0" width="12" height="12" rx="2" fill="#252d42"/><path d="M4.700 2.600H9.400V7.300L7.900 5.800 4.300 9.400 2.600 7.700 6.200 4.100Z" fill="#fff"/></svg>
<div class="t " style="left:555.00px;top:737.000px;font-size:13px;line-height:19px;color:#252d42;letter-spacing:-0.397px;">128492</div>
<svg class="b" style="left:600px;top:740.3px;" width="11.4" height="11.4" viewBox="0 0 12 12"><rect x="0" y="0" width="12" height="12" rx="2" fill="#252d42"/><path d="M4.700 2.600H9.400V7.300L7.900 5.800 4.300 9.400 2.600 7.700 6.200 4.100Z" fill="#fff"/></svg>
<div class="b " style="left:92px;top:807px;width:543px;height:1px;background:#dfe3ea;"></div>
<div class="b bd" style="left:97px;top:777px;width:20px;height:20px;border-radius:50%;background:#1c1cd2;color:#fff;font-size:11px;line-height:20px;">9</div>
<div class="t " style="left:138.20px;top:779.000px;font-size:12.5px;line-height:18px;color:#252d42;letter-spacing:-0.285px;">103663</div>
<svg class="b" style="left:182.6px;top:781.8px;" width="11.4" height="11.4" viewBox="0 0 12 12"><rect x="0" y="0" width="12" height="12" rx="2" fill="#252d42"/><path d="M4.700 2.600H9.400V7.300L7.900 5.800 4.300 9.400 2.600 7.700 6.200 4.100Z" fill="#fff"/></svg>
<div class="t " style="left:222.40px;top:779.000px;font-size:12px;line-height:18px;color:#252d42;letter-spacing:-0.336px;">CUSFIELDS-001</div>
<div class="t " style="left:346.00px;top:779.000px;font-size:12px;line-height:18px;color:#252d42;letter-spacing:-0.781px;">SERVICE</div>
<svg class="b" style="left:397px;top:781.8px;" width="11.4" height="11.4" viewBox="0 0 12 12"><rect x="0" y="0" width="12" height="12" rx="2" fill="#252d42"/><path d="M4.700 2.600H9.400V7.300L7.900 5.800 4.300 9.400 2.600 7.700 6.200 4.100Z" fill="#fff"/></svg>
<div class="t " style="left:470.00px;top:778.000px;font-size:13px;line-height:19px;color:#252d42;letter-spacing:-0.397px;">440324</div>
<svg class="b" style="left:515px;top:781.8px;" width="11.4" height="11.4" viewBox="0 0 12 12"><rect x="0" y="0" width="12" height="12" rx="2" fill="#252d42"/><path d="M4.700 2.600H9.400V7.300L7.900 5.800 4.300 9.400 2.600 7.700 6.200 4.100Z" fill="#fff"/></svg>
<div class="t " style="left:555.00px;top:778.000px;font-size:13px;line-height:19px;color:#252d42;letter-spacing:-0.397px;">128458</div>
<svg class="b" style="left:600px;top:781.8px;" width="11.4" height="11.4" viewBox="0 0 12 12"><rect x="0" y="0" width="12" height="12" rx="2" fill="#252d42"/><path d="M4.700 2.600H9.400V7.300L7.900 5.800 4.300 9.400 2.600 7.700 6.200 4.100Z" fill="#fff"/></svg>
<div class="b " style="left:92px;top:849px;width:543px;height:1px;background:#dfe3ea;"></div>
<div class="b bd" style="left:97px;top:818.5px;width:20px;height:20px;border-radius:50%;background:#b516b5;color:#fff;font-size:11px;line-height:20px;">5</div>
<div class="t " style="left:138.20px;top:821.000px;font-size:12.5px;line-height:18px;color:#252d42;letter-spacing:-0.285px;">103661</div>
<svg class="b" style="left:182.6px;top:823.3px;" width="11.4" height="11.4" viewBox="0 0 12 12"><rect x="0" y="0" width="12" height="12" rx="2" fill="#252d42"/><path d="M4.700 2.600H9.400V7.300L7.900 5.800 4.300 9.400 2.600 7.700 6.200 4.100Z" fill="#fff"/></svg>
<div class="t " style="left:222.40px;top:821.000px;font-size:12.5px;line-height:18px;color:#252d42;letter-spacing:-0.354px;">ADXXX123</div>
<div class="t " style="left:346.00px;top:821.000px;font-size:12px;line-height:18px;color:#252d42;letter-spacing:-0.781px;">SERVICE</div>
<svg class="b" style="left:397px;top:823.3px;" width="11.4" height="11.4" viewBox="0 0 12 12"><rect x="0" y="0" width="12" height="12" rx="2" fill="#252d42"/><path d="M4.700 2.600H9.400V7.300L7.900 5.800 4.300 9.400 2.600 7.700 6.200 4.100Z" fill="#fff"/></svg>
<div class="t " style="left:470.00px;top:820.000px;font-size:13px;line-height:19px;color:#252d42;letter-spacing:-0.397px;">440416</div>
<svg class="b" style="left:515px;top:823.3px;" width="11.4" height="11.4" viewBox="0 0 12 12"><rect x="0" y="0" width="12" height="12" rx="2" fill="#252d42"/><path d="M4.700 2.600H9.400V7.300L7.900 5.800 4.300 9.400 2.600 7.700 6.200 4.100Z" fill="#fff"/></svg>
<div class="t " style="left:555.00px;top:820.000px;font-size:13px;line-height:19px;color:#252d42;letter-spacing:-0.397px;">128450</div>
<svg class="b" style="left:600px;top:823.3px;" width="11.4" height="11.4" viewBox="0 0 12 12"><rect x="0" y="0" width="12" height="12" rx="2" fill="#252d42"/><path d="M4.700 2.600H9.400V7.300L7.900 5.800 4.300 9.400 2.600 7.700 6.200 4.100Z" fill="#fff"/></svg>
<div class="b " style="left:92px;top:891px;width:543px;height:1px;background:#dfe3ea;"></div>
<div class="b bd" style="left:97px;top:860.5px;width:20px;height:20px;border-radius:50%;background:#b516b5;color:#fff;font-size:11px;line-height:20px;">5</div>
<div class="t " style="left:138.20px;top:863.000px;font-size:12.5px;line-height:18px;color:#252d42;letter-spacing:-0.285px;">103660</div>
<svg class="b" style="left:182.6px;top:865.3px;" width="11.4" height="11.4" viewBox="0 0 12 12"><rect x="0" y="0" width="12" height="12" rx="2" fill="#252d42"/><path d="M4.700 2.600H9.400V7.300L7.900 5.800 4.300 9.400 2.600 7.700 6.200 4.100Z" fill="#fff"/></svg>
<div class="t " style="left:222.40px;top:862.000px;font-size:13px;line-height:19px;color:#252d42;letter-spacing:-0.142px;">hahahahtest</div>
<div class="t " style="left:346.00px;top:863.000px;font-size:12px;line-height:18px;color:#252d42;letter-spacing:-0.781px;">SERVICE</div>
<svg class="b" style="left:397px;top:865.3px;" width="11.4" height="11.4" viewBox="0 0 12 12"><rect x="0" y="0" width="12" height="12" rx="2" fill="#252d42"/><path d="M4.700 2.600H9.400V7.300L7.900 5.800 4.300 9.400 2.600 7.700 6.200 4.100Z" fill="#fff"/></svg>
<div class="t " style="left:470.00px;top:862.000px;font-size:13px;line-height:19px;color:#252d42;letter-spacing:-0.397px;">440412</div>
<svg class="b" style="left:515px;top:865.3px;" width="11.4" height="11.4" viewBox="0 0 12 12"><rect x="0" y="0" width="12" height="12" rx="2" fill="#252d42"/><path d="M4.700 2.600H9.400V7.300L7.900 5.800 4.300 9.400 2.600 7.700 6.200 4.100Z" fill="#fff"/></svg>
<div class="t " style="left:555.00px;top:862.000px;font-size:13px;line-height:19px;color:#252d42;letter-spacing:-0.397px;">128447</div>
<svg class="b" style="left:600px;top:865.3px;" width="11.4" height="11.4" viewBox="0 0 12 12"><rect x="0" y="0" width="12" height="12" rx="2" fill="#252d42"/><path d="M4.700 2.600H9.400V7.300L7.900 5.800 4.300 9.400 2.600 7.700 6.200 4.100Z" fill="#fff"/></svg>
<div class="t " style="left:480.00px;top:903.000px;font-size:11px;line-height:16px;color:#333b4f;letter-spacing:-0.115px;">Page 1 / 3</div>
<svg class="b" style="left:545.5px;top:906.5px;" width="9" height="9" viewBox="0 0 9 9"><g fill="#d3d7de"><rect x="0.500" y="0.500" width="1.500" height="8"/><path d="M8 0.500V8.500L2.500 4.500Z"/></g></svg>
<svg class="b" style="left:570.5px;top:906.5px;" width="9" height="9" viewBox="0 0 9 9"><g fill="#d3d7de"><path d="M7 0.500V8.500L1.500 4.500Z"/></g></svg>
<svg class="b" style="left:593.5px;top:906.5px;" width="9" height="9" viewBox="0 0 9 9"><g fill="#1d2435"><path d="M2 0.500V8.500L7.500 4.500Z"/></g></svg>
<svg class="b" style="left:617.5px;top:906.5px;" width="9" height="9" viewBox="0 0 9 9"><g fill="#1d2435"><rect x="7" y="0.500" width="1.500" height="8"/><path d="M1 0.500V8.500L6.500 4.500Z"/></g></svg>
<div class="b " style="left:647px;top:72px;width:6px;height:889px;background:#f3f4f6;border:1px solid #d6d9df;box-sizing:border-box;"></div>
<div class="b " style="left:649px;top:507px;width:2px;height:16px;background:#1f2940;"></div>
<div class="t " style="left:657.00px;top:76.000px;font-size:14px;line-height:20px;color:#252d42;letter-spacing:-0.094px;font-weight:700;">Service order operation</div>
<div class="b " style="left:657px;top:97px;width:1255px;height:2px;background:#f57c00;"></div>
<div class="b " style="left:660.5px;top:107px;width:406px;height:103.5px;background:#dde3ec;border-radius:4px;"></div>
<svg class="b" style="left:670.8px;top:114px;" width="27.2" height="34.6" viewBox="0 0 27.2 34.6"><rect x="1.2" y="1.2" width="24.800" height="32.200" rx="2.500" fill="none" stroke="#252d42" stroke-width="2.300"/><circle cx="13.600" cy="9.600" r="3.400" fill="#252d42"/><path d="M7.300 17.400c0-2.800 2.800-4 6.300-4s6.300 1.200 6.300 4Z" fill="#252d42"/><rect x="5.800" y="19.800" width="15.600" height="2.500" fill="#252d42"/><rect x="5.800" y="24" width="15.600" height="2.500" fill="#252d42"/><rect x="5.800" y="28.200" width="15.600" height="2.300" fill="#252d42"/></svg>
<div class="t " style="left:709.00px;top:112.000px;font-size:12px;line-height:18px;color:#5d6679;letter-spacing:-0.121px;">Customer / 100000</div>
<svg class="b" style="left:812.8px;top:115.4px;" width="10.2" height="10.2" viewBox="0 0 12 12"><rect x="0" y="0" width="12" height="12" rx="2" fill="#252d42"/><path d="M4.700 2.600H9.400V7.300L7.900 5.800 4.300 9.400 2.600 7.700 6.200 4.100Z" fill="#fff"/></svg>
<div class="t " style="left:709.00px;top:128.000px;font-size:13px;line-height:19px;color:#252d42;letter-spacing:-0.071px;">Default CUS for CDV, Fornavn2</div>
<div class="t " style="left:670.00px;top:159.000px;font-size:12px;line-height:18px;color:#5d6679;letter-spacing:-0.160px;">Customers reference</div>
<div class="b " style="left:670px;top:198px;width:181px;height:1px;background:#a9b1be;"></div>
<div class="t " style="left:864.00px;top:159.000px;font-size:12px;line-height:18px;color:#5d6679;letter-spacing:-0.124px;">Customers reference no</div>
<div class="b " style="left:864px;top:198px;width:182px;height:1px;background:#a9b1be;"></div>
<div class="b " style="left:1054px;top:196px;width:13px;height:14.5px;background:#f3f4f6;border-radius:3px 0 4px 0;"></div>
<svg class="b" style="left:1057px;top:199.8px;" width="9" height="9.5" viewBox="0 0 9 9.5"><path d="M1 1L4.500 4.200L8 1M1 5L4.500 8.200L8 5" stroke="#4d566a" stroke-width="1.200" fill="none"/></svg>
<div class="t " style="left:665.00px;top:223.000px;font-size:12px;line-height:18px;color:#5d6679;letter-spacing:0.163px;">Note</div>
<div class="b " style="left:665px;top:239px;width:390px;height:85px;background:#f3f4f6;border:1px solid #c8ccd3;border-radius:4px;box-sizing:border-box;"></div>
<div class="t " style="left:673.00px;top:241.000px;font-size:13px;line-height:19px;color:#252d42;letter-spacing:0.090px;">Dette er en tekst som ligger hvor på ART ?</div>
<div class="t " style="left:673.00px;top:257.000px;font-size:13px;line-height:19px;color:#252d42;letter-spacing:-0.186px;">Product: 106 Level 4 Sub 1</div>
<div class="t " style="left:673.00px;top:273.000px;font-size:13px;line-height:19px;color:#252d42;letter-spacing:-0.017px;">Serial number: SNO-2022-0041985</div>
<svg class="b" style="left:1044px;top:313px;" width="9" height="9" viewBox="0 0 9 9"><path d="M8.500 0.500L0.500 8.500M8.500 4.500L4.500 8.500" stroke="#555" stroke-width="1"/></svg>
<div class="t " style="left:1086.00px;top:108.000px;font-size:12px;line-height:18px;color:#5d6679;letter-spacing:0.077px;">Production work order</div>
<svg class="b" style="left:1208.4px;top:112.2px;" width="10.2" height="10.2" viewBox="0 0 12 12"><rect x="0" y="0" width="12" height="12" rx="2" fill="#252d42"/><path d="M4.700 2.600H9.400V7.300L7.900 5.800 4.300 9.400 2.600 7.700 6.200 4.100Z" fill="#fff"/></svg>
<div class="t " style="left:1086.00px;top:127.000px;font-size:13px;line-height:19px;color:#252d42;letter-spacing:-0.397px;">130491</div>
<div class="b " style="left:1086px;top:147px;width:176px;height:1px;background:#a9b1be;"></div>
<div class="b bd" style="left:1262.5px;top:128px;width:18px;height:18px;border-radius:50%;background:#b516b5;color:#fff;font-size:11px;line-height:18px;">5</div>
<div class="t " style="left:1086.00px;top:163.000px;font-size:12px;line-height:18px;color:#5d6679;letter-spacing:-0.159px;">Service order</div>
<svg class="b" style="left:1158.7px;top:167.2px;" width="10.2" height="10.2" viewBox="0 0 12 12"><rect x="0" y="0" width="12" height="12" rx="2" fill="#252d42"/><path d="M4.700 2.600H9.400V7.300L7.900 5.800 4.300 9.400 2.600 7.700 6.200 4.100Z" fill="#fff"/></svg>
<div class="t " style="left:1086.00px;top:182.000px;font-size:13px;line-height:19px;color:#252d42;letter-spacing:-0.397px;">103794</div>
<div class="b " style="left:1086px;top:202px;width:188px;height:1px;background:#a9b1be;"></div>
<div class="t " style="left:1287.00px;top:163.000px;font-size:12px;line-height:18px;color:#5d6679;letter-spacing:-0.139px;">Serial number</div>
<div class="t " style="left:1287.00px;top:182.000px;font-size:13px;line-height:19px;color:#252d42;letter-spacing:-0.085px;">SNO-2022-0041985</div>
<div class="b " style="left:1287px;top:202px;width:189px;height:1px;background:#a9b1be;"></div>
<div class="t " style="left:1086.00px;top:209.000px;font-size:12px;line-height:18px;color:#5d6679;letter-spacing:-0.051px;">Product</div>
<svg class="b" style="left:1130.4px;top:213.2px;" width="10.2" height="10.2" viewBox="0 0 12 12"><rect x="0" y="0" width="12" height="12" rx="2" fill="#252d42"/><path d="M4.700 2.600H9.400V7.300L7.900 5.800 4.300 9.400 2.600 7.700 6.200 4.100Z" fill="#fff"/></svg>
<div class="t " style="left:1086.00px;top:228.000px;font-size:13px;line-height:19px;color:#252d42;letter-spacing:-0.342px;">106 Level 4 Sub 1</div>
<div class="b " style="left:1086px;top:248px;width:182px;height:1px;background:#a9b1be;"></div>
<div class="t " style="left:1287.00px;top:209.000px;font-size:12px;line-height:18px;color:#5d6679;letter-spacing:0.059px;">Product unit id</div>
<svg class="b" style="left:1368px;top:213.2px;" width="10.2" height="10.2" viewBox="0 0 12 12"><rect x="0" y="0" width="12" height="12" rx="2" fill="#252d42"/><path d="M4.700 2.600H9.400V7.300L7.900 5.800 4.300 9.400 2.600 7.700 6.200 4.100Z" fill="#fff"/></svg>
<div class="t " style="left:1287.00px;top:228.000px;font-size:13px;line-height:19px;color:#252d42;letter-spacing:-0.397px;">448675</div>
<div class="b " style="left:1287px;top:248px;width:189px;height:1px;background:#a9b1be;"></div>
<div class="t " style="left:1086.00px;top:255.000px;font-size:12px;line-height:18px;color:#5d6679;letter-spacing:-0.197px;">Service job</div>
<svg class="b" style="left:1146.6px;top:259.2px;" width="10.2" height="10.2" viewBox="0 0 12 12"><rect x="0" y="0" width="12" height="12" rx="2" fill="#252d42"/><path d="M4.700 2.600H9.400V7.300L7.900 5.800 4.300 9.400 2.600 7.700 6.200 4.100Z" fill="#fff"/></svg>
<div class="t " style="left:1086.00px;top:274.000px;font-size:13px;line-height:19px;color:#252d42;letter-spacing:-0.104px;">233Service</div>
<div class="b " style="left:1086px;top:294px;width:158px;height:1px;background:#a9b1be;"></div>
<div class="t " style="left:1287.00px;top:255.000px;font-size:12px;line-height:18px;color:#5d6679;letter-spacing:-0.105px;">Requested delivery date</div>
<div class="t " style="left:1287.00px;top:274.000px;font-size:13px;line-height:19px;color:#252d42;letter-spacing:-0.410px;">2022.08.11</div>
<div class="b " style="left:1287px;top:294px;width:163px;height:0px;border-top:1px dashed #9aa3b2;"></div>
<div class="t " style="left:1086.00px;top:301.000px;font-size:12px;line-height:18px;color:#5d6679;letter-spacing:-0.068px;">Product unit SSA item</div>
<svg class="b" style="left:1204.7px;top:305.2px;" width="10.2" height="10.2" viewBox="0 0 12 12"><rect x="0" y="0" width="12" height="12" rx="2" fill="#252d42"/><path d="M4.700 2.600H9.400V7.300L7.900 5.800 4.300 9.400 2.600 7.700 6.200 4.100Z" fill="#fff"/></svg>
<div class="t " style="left:1086.00px;top:320.000px;font-size:13px;line-height:19px;color:#252d42;letter-spacing:-0.397px;">327907</div>
<div class="b " style="left:1086px;top:340px;width:182px;height:1px;background:#a9b1be;"></div>
<svg class="b" style="left:1248px;top:277.5px;" width="13" height="12" viewBox="0 0 13 12"><g fill="#252d42"><rect x="0.500" y="3" width="12" height="8.500" rx="1"/><path d="M4 3V1.200H9V3H7.800V2.300H5.200V3Z"/></g><path d="M3.500 9.500L8 5" stroke="#f3f4f6" stroke-width="1.300"/><circle cx="8.600" cy="4.600" r="1.400" fill="#f3f4f6"/><path d="M3 5L8 10" stroke="#f3f4f6" stroke-width="1.100"/></svg>
<div class="t " style="left:1262.00px;top:276.000px;font-size:11px;line-height:16px;color:#4a5265;letter-spacing:-0.250px;">KM</div>
<svg class="b" style="left:1455.5px;top:275.8px;" width="15" height="15" viewBox="0 0 15 15"><rect x="1" y="2.300" width="13" height="12" rx="1.200" fill="none" stroke="#252d42" stroke-width="1.100"/><rect x="1" y="2.300" width="13" height="2.200" fill="#252d42"/><rect x="3.700" y="0.500" width="1.300" height="2.500" fill="#252d42"/><rect x="10" y="0.500" width="1.300" height="2.500" fill="#252d42"/><rect x="8.800" y="9" width="3.200" height="3.200" fill="#252d42"/></svg>
<div class="b " style="left:661px;top:352px;width:827px;height:591px;background:#fff;border-radius:4px;"></div>
<div class="b " style="left:727px;top:381px;width:761px;height:2px;background:#f57c00;"></div>
<div class="b " style="left:726px;top:352px;width:1px;height:29px;background:#c3cbd7;"></div>
<div class="b " style="left:837px;top:352px;width:1px;height:29px;background:#c3cbd7;"></div>
<div class="t " style="left:676.70px;top:357.000px;font-size:13px;line-height:19px;color:#252d42;letter-spacing:-0.192px;font-weight:700;">Items</div>
<div class="t " style="left:743.10px;top:357.000px;font-size:13px;line-height:19px;color:#6c7487;letter-spacing:-0.330px;font-weight:700;">Assignments</div>
<div class="b " style="left:665px;top:388px;width:817px;height:55.5px;background:#dde3ec;"></div>
<div class="t " style="left:675.00px;top:399.000px;font-size:12px;line-height:18px;color:#3f475b;letter-spacing:-0.252px;">Part</div>
<div class="t " style="left:675.00px;top:418.000px;font-size:13px;line-height:19px;color:#858c9b;letter-spacing:-0.106px;">Start typing...</div>
<svg class="b" style="left:915px;top:424px;" width="9" height="7" viewBox="0 0 9 7"><path d="M0.300 0.500H8.700L4.500 6.500Z" fill="#222b3d"/></svg>
<div class="b " style="left:675px;top:438px;width:256px;height:0px;border-top:1px dashed #9aa3b2;"></div>
<div class="t " style="left:944.00px;top:399.000px;font-size:12px;line-height:18px;color:#3f475b;letter-spacing:0.164px;">Quantity</div>
<div class="t " style="left:944.00px;top:419.000px;font-size:12.5px;line-height:18px;color:#252d42;letter-spacing:-0.332px;">1.00</div>
<div class="b " style="left:944px;top:438px;width:257px;height:0px;border-top:1px dashed #9aa3b2;"></div>
<div class="b " style="left:1214px;top:406px;width:67px;height:32px;background:#eef1f5;border-radius:3px;"></div>
<svg class="b" style="left:1229.5px;top:417px;" width="12" height="12" viewBox="0 0 12 12"><path d="M6 0.500V11.500M0.500 6H11.500" stroke="#c3c8d1" stroke-width="2.400"/></svg>
<div class="t " style="left:1243.50px;top:414.000px;font-size:13px;line-height:19px;color:#c3c8d1;letter-spacing:0.623px;">Add</div>
<div class="b " style="left:668px;top:451px;width:759px;height:26px;background:#fff;border:1px solid #c8ccd3;border-radius:4px;box-sizing:border-box;"></div>
<div class="t " style="left:676.30px;top:456.000px;font-size:13px;line-height:19px;color:#858c9b;letter-spacing:-0.157px;">Enter your search criteria here</div>
<svg class="b" style="left:1437.5px;top:458.9px;" width="13" height="13" viewBox="0 0 13 13"><path d="M0.500 0.800H12.500L7.800 6.300V12.500L5.200 10.800V6.300Z" fill="#222b3d"/></svg>
<svg class="b" style="left:1461.7px;top:457.6px;" width="15" height="15" viewBox="0 0 15 15"><polygon points="6.31,0.70 8.69,0.70 8.77,2.56 10.10,3.11 11.47,1.85 13.15,3.53 11.89,4.90 12.44,6.23 14.30,6.31 14.30,8.69 12.44,8.77 11.89,10.10 13.15,11.47 11.47,13.15 10.10,11.89 8.77,12.44 8.69,14.30 6.31,14.30 6.23,12.44 4.90,11.89 3.53,13.15 1.85,11.47 3.11,10.10 2.56,8.77 0.70,8.69 0.70,6.31 2.56,6.23 3.11,4.90 1.85,3.53 3.53,1.85 4.90,3.11 6.23,2.56" fill="#222b3d" stroke="#222b3d" stroke-width="0.800" stroke-linejoin="round"/><circle cx="7.5" cy="7.500" r="2.400" fill="#fff"/></svg>
<div class="t " style="left:669.00px;top:493.000px;font-size:13px;line-height:19px;color:#252d42;letter-spacing:-0.155px;font-weight:700;">It...</div>
<div class="t " style="left:704.00px;top:493.000px;font-size:13px;line-height:19px;color:#252d42;letter-spacing:-0.073px;font-weight:700;">Part</div>
<div class="t " style="left:1084.00px;top:493.000px;font-size:13px;line-height:19px;color:#252d42;letter-spacing:0.110px;font-weight:700;">Qty</div>
<div class="t " style="left:1134.00px;top:493.000px;font-size:12.75px;line-height:19px;color:#252d42;letter-spacing:-0.418px;font-weight:700;">Assig...</div>
<div class="t " style="left:1197.00px;top:492.000px;font-size:13px;line-height:19px;color:#252d42;letter-spacing:0.041px;font-weight:700;">Net price</div>
<div class="t " style="left:1262.00px;top:493.000px;font-size:13px;line-height:19px;color:#252d42;letter-spacing:-0.361px;font-weight:700;">Serial...</div>
<div class="t " style="left:1312.00px;top:493.000px;font-size:13px;line-height:19px;color:#252d42;letter-spacing:-0.395px;font-weight:700;">Picke</div>
<div class="t " style="left:1362.00px;top:493.000px;font-size:13px;line-height:19px;color:#252d42;letter-spacing:-0.239px;font-weight:700;">Actions</div>
<div class="b " style="left:664px;top:514px;width:819px;height:44.5px;background:#cbd1d9;"></div>
<div class="t " style="left:670.00px;top:527.000px;font-size:13px;line-height:19px;color:#252d42;letter-spacing:-0.100px;">3</div>
<div class="t " style="left:705.00px;top:520.000px;font-size:11px;line-height:16px;color:#252d42;letter-spacing:0.081px;font-weight:700;">233 part helt ny</div>
<svg class="b" style="left:791px;top:523.5px;" width="10" height="10" viewBox="0 0 12 12"><rect x="0" y="0" width="12" height="12" rx="2" fill="#252d42"/><path d="M4.700 2.600H9.400V7.300L7.900 5.800 4.300 9.400 2.600 7.700 6.200 4.100Z" fill="#fff"/></svg>
<div class="t " style="left:705.00px;top:535.000px;font-size:13px;line-height:19px;color:#252d42;letter-spacing:-0.069px;">Tester PDM unitcost</div>
<svg class="b" style="left:1038px;top:531px;" width="11" height="11" viewBox="0 0 11 11"><polygon points="4.59,0.28 6.41,0.28 6.47,1.72 7.49,2.14 8.55,1.16 9.84,2.45 8.86,3.51 9.28,4.53 10.72,4.59 10.72,6.41 9.28,6.47 8.86,7.49 9.84,8.55 8.55,9.84 7.49,8.86 6.47,9.28 6.41,10.72 4.59,10.72 4.53,9.28 3.51,8.86 2.45,9.84 1.16,8.55 2.14,7.49 1.72,6.47 0.28,6.41 0.28,4.59 1.72,4.53 2.14,3.51 1.16,2.45 2.45,1.16 3.51,2.14 4.53,1.72" fill="#2a3348" stroke="#2a3348" stroke-width="0.800" stroke-linejoin="round"/><circle cx="5.500" cy="5.500" r="2.200" fill="#cbd1d9"/></svg>
<div class="t " style="left:1050.50px;top:529.000px;font-size:11px;line-height:16px;color:#4a5265;letter-spacing:0.000px;">P</div>
<div class="t " style="left:1114.37px;top:527.000px;font-size:13px;line-height:19px;color:#252d42;letter-spacing:-0.100px;">2</div>
<svg class="b" style="left:1150px;top:530.5px;" width="11" height="12" viewBox="0 0 11 12"><path d="M1 0.600H6.500L9.500 3.600V11.400H1Z" fill="none" stroke="#2a3348" stroke-width="1"/><path d="M6.300 0.600V3.800H9.500" fill="none" stroke="#2a3348" stroke-width="0.900"/><path d="M2.500 8.500H5M2.500 6.500H4.500" stroke="#2a3348" stroke-width="0.800"/><path d="M6 9.800L8.500 7.200L7.500 10.200Z" fill="#2a3348"/><circle cx="8.800" cy="9" r="0.900" fill="#2a3348"/></svg>
<div class="t " style="left:1223.80px;top:528.000px;font-size:12.5px;line-height:18px;color:#252d42;letter-spacing:-0.416px;">14.00</div>
<svg class="b" style="left:1276.5px;top:532px;" width="14" height="9" viewBox="0 0 14 9"><path d="M0.500 1.800H6M0.500 4.500H6M0.500 7.200H6" stroke="#2a3348" stroke-width="1.100"/><path d="M10.200 1.500V7.500M7.200 4.500H13.200" stroke="#2a3348" stroke-width="1.200"/></svg>
<svg class="b" style="left:1365.7px;top:530.7px;" width="13.5" height="11" viewBox="0 0 13.5 11"><path d="M8.800 6V8.800a1.200 1.200 0 0 1-1.200 1.200H1.800A1.200 1.200 0 0 1 .6 8.800V3.300a1.200 1.200 0 0 1 1.200-1.200H6.500" fill="none" stroke="#2a3348" stroke-width="1"/><path d="M4.600 5.600L10.200 .6L11.900 2.300L6.300 7.300L4.200 7.700Z" fill="#2a3348"/></svg>
<svg class="b" style="left:1391.7px;top:531.2px;" width="13" height="12" viewBox="0 0 13 12"><g fill="none" stroke="#2a3348" stroke-width="0.950"><path d="M0.300 0.800H2.300L4 8.300H11.500"/><path d="M2.600 2.300H12.300L11.500 6.500H3.700"/><path d="M3 4.400H12M5.500 2.300V6.500M8.300 2.300V6.500"/><path d="M4 8.300V9.300"/></g><rect x="4" y="9.800" width="1.600" height="1.500" fill="#2a3348"/><rect x="9.300" y="9.800" width="1.600" height="1.500" fill="#2a3348"/></svg>
<svg class="b" style="left:1419px;top:531px;" width="10" height="11.5" viewBox="0 0 10 11.5"><path d="M0.300 2.500H9.700M3.200 2.500V0.800H6.800V2.500" fill="none" stroke="#2a3348" stroke-width="0.950"/><path d="M1.400 2.800V10a0.800 0.800 0 0 0 .8.800H7.800a0.800 0.800 0 0 0 .8-.8V2.800" fill="none" stroke="#2a3348" stroke-width="0.950"/><path d="M3.500 4.500V9M5 4.500V9M6.500 4.500V9" stroke="#2a3348" stroke-width="0.700"/></svg>
<div class="b " style="left:1443px;top:523.7px;width:25px;height:25px;border-radius:50%;background:#d3d8e1;border:1px solid #c9cfd9;box-sizing:border-box;"></div>
<svg class="b" style="left:1452px;top:530.2px;" width="8" height="12" viewBox="0 0 8 12"><path d="M1.500 1.500L6 6L1.500 10.500" stroke="#f57c00" stroke-width="2.200" fill="none"/></svg>
<div class="t " style="left:670.00px;top:572.000px;font-size:13px;line-height:19px;color:#252d42;letter-spacing:-0.100px;">4</div>
<div class="t " style="left:705.00px;top:565.000px;font-size:11px;line-height:16px;color:#252d42;letter-spacing:0.104px;font-weight:700;">233 PDM mat 1</div>
<svg class="b" style="left:788px;top:568.2px;" width="10" height="10" viewBox="0 0 12 12"><rect x="0" y="0" width="12" height="12" rx="2" fill="#252d42"/><path d="M4.700 2.600H9.400V7.300L7.900 5.800 4.300 9.400 2.600 7.700 6.200 4.100Z" fill="#fff"/></svg>
<div class="t " style="left:705.00px;top:579.000px;font-size:13px;line-height:19px;color:#252d42;letter-spacing:0.047px;">Materiale 1 for PDM-test</div>
<svg class="b" style="left:1038px;top:575.7px;" width="12.5" height="10.5" viewBox="0 0 12.5 10.5"><path d="M0.300 5.200L11.800 0.400L9.300 4.300H6.700L5 10H3.300L4.400 6.200L0.300 6.800Z" fill="#2a3348"/><path d="M7.500 10L10.300 4.300" stroke="#2a3348" stroke-width="1"/><path d="M0.800 8.300H2.500" stroke="#2a3348" stroke-width="0.800"/></svg>
<div class="t " style="left:1052.00px;top:574.000px;font-size:11px;line-height:16px;color:#4a5265;letter-spacing:0.000px;">M</div>
<div class="t " style="left:1107.24px;top:572.000px;font-size:13px;line-height:19px;color:#252d42;letter-spacing:-0.100px;">20</div>
<svg class="b" style="left:1150px;top:575.2px;" width="11" height="12" viewBox="0 0 11 12"><path d="M1 0.600H6.500L9.500 3.600V11.400H1Z" fill="none" stroke="#2a3348" stroke-width="1"/><path d="M6.300 0.600V3.800H9.500" fill="none" stroke="#2a3348" stroke-width="0.900"/><path d="M2.500 8.500H5M2.500 6.500H4.500" stroke="#2a3348" stroke-width="0.800"/><path d="M6 9.800L8.500 7.200L7.500 10.200Z" fill="#2a3348"/><circle cx="8.800" cy="9" r="0.900" fill="#2a3348"/></svg>
<div class="t " style="left:1231.20px;top:573.000px;font-size:12px;line-height:18px;color:#252d42;letter-spacing:-0.389px;">1.33</div>
<svg class="b" style="left:1276.5px;top:576.7px;" width="14" height="9" viewBox="0 0 14 9"><path d="M0.500 1.800H6M0.500 4.500H6M0.500 7.200H6" stroke="#2a3348" stroke-width="1.100"/><path d="M10.200 1.500V7.500M7.200 4.500H13.200" stroke="#2a3348" stroke-width="1.200"/></svg>
<svg class="b" style="left:1365.7px;top:575.4px;" width="13.5" height="11" viewBox="0 0 13.5 11"><path d="M8.800 6V8.800a1.200 1.200 0 0 1-1.200 1.200H1.800A1.200 1.200 0 0 1 .6 8.800V3.300a1.200 1.200 0 0 1 1.200-1.200H6.500" fill="none" stroke="#2a3348" stroke-width="1"/><path d="M4.600 5.600L10.200 .6L11.900 2.300L6.300 7.300L4.200 7.700Z" fill="#2a3348"/></svg>
<svg class="b" style="left:1391.7px;top:575.9px;" width="13" height="12" viewBox="0 0 13 12"><g fill="none" stroke="#2a3348" stroke-width="0.950"><path d="M0.300 0.800H2.300L4 8.300H11.500"/><path d="M2.600 2.300H12.300L11.500 6.500H3.700"/><path d="M3 4.400H12M5.500 2.300V6.500M8.300 2.300V6.500"/><path d="M4 8.300V9.300"/></g><rect x="4" y="9.800" width="1.600" height="1.500" fill="#2a3348"/><rect x="9.300" y="9.800" width="1.600" height="1.500" fill="#2a3348"/></svg>
<svg class="b" style="left:1419px;top:575.7px;" width="10" height="11.5" viewBox="0 0 10 11.5"><path d="M0.300 2.500H9.700M3.200 2.500V0.800H6.800V2.500" fill="none" stroke="#2a3348" stroke-width="0.950"/><path d="M1.400 2.800V10a0.800 0.800 0 0 0 .8.800H7.800a0.800 0.800 0 0 0 .8-.8V2.800" fill="none" stroke="#2a3348" stroke-width="0.950"/><path d="M3.500 4.500V9M5 4.500V9M6.500 4.500V9" stroke="#2a3348" stroke-width="0.700"/></svg>
<div class="b " style="left:1443px;top:568.4px;width:25px;height:25px;border-radius:50%;background:#e3e7ee;border:1px solid #c9cfd9;box-sizing:border-box;"></div>
<svg class="b" style="left:1452px;top:574.9px;" width="8" height="12" viewBox="0 0 8 12"><path d="M1.500 1.500L6 6L1.500 10.500" stroke="#f57c00" stroke-width="2.200" fill="none"/></svg>
<div class="b " style="left:665px;top:602px;width:817px;height:1px;background:#dfe3ea;"></div>
<div class="t " style="left:670.00px;top:615.000px;font-size:13px;line-height:19px;color:#252d42;letter-spacing:-0.100px;">5</div>
<div class="t " style="left:705.00px;top:616.000px;font-size:11px;line-height:16px;color:#252d42;letter-spacing:-0.154px;font-weight:700;">Joystick Development Board</div>
<svg class="b" style="left:856px;top:618.8px;" width="10" height="10" viewBox="0 0 12 12"><rect x="0" y="0" width="12" height="12" rx="2" fill="#252d42"/><path d="M4.700 2.600H9.400V7.300L7.900 5.800 4.300 9.400 2.600 7.700 6.200 4.100Z" fill="#fff"/></svg>
<svg class="b" style="left:1038px;top:618.3px;" width="13" height="12" viewBox="0 0 13 12"><g fill="#2a3348"><rect x="0.500" y="3" width="12" height="8.500" rx="1"/><path d="M4 3V1.200H9V3H7.800V2.300H5.200V3Z"/></g><path d="M3.500 9.500L8 5" stroke="#fff" stroke-width="1.300"/><circle cx="8.600" cy="4.600" r="1.400" fill="#fff"/><path d="M3 5L8 10" stroke="#fff" stroke-width="1.100"/></svg>
<div class="t " style="left:1052.00px;top:617.000px;font-size:11px;line-height:16px;color:#4a5265;letter-spacing:0.000px;">K</div>
<div class="t " style="left:1114.37px;top:615.000px;font-size:13px;line-height:19px;color:#252d42;letter-spacing:-0.100px;">1</div>
<svg class="b" style="left:1150px;top:618.3px;" width="11" height="12" viewBox="0 0 11 12"><path d="M1 0.600H6.500L9.500 3.600V11.400H1Z" fill="none" stroke="#2a3348" stroke-width="1"/><path d="M6.300 0.600V3.800H9.500" fill="none" stroke="#2a3348" stroke-width="0.900"/><path d="M2.500 8.500H5M2.500 6.500H4.500" stroke="#2a3348" stroke-width="0.800"/><path d="M6 9.800L8.500 7.200L7.500 10.200Z" fill="#2a3348"/><circle cx="8.800" cy="9" r="0.900" fill="#2a3348"/></svg>
<div class="t " style="left:1216.30px;top:615.000px;font-size:12.75px;line-height:19px;color:#252d42;letter-spacing:-0.383px;">388.16</div>
<svg class="b" style="left:1276.5px;top:619.8px;" width="14" height="9" viewBox="0 0 14 9"><path d="M0.500 1.800H6M0.500 4.500H6M0.500 7.200H6" stroke="#2a3348" stroke-width="1.100"/><path d="M10.200 1.500V7.500M7.200 4.500H13.200" stroke="#2a3348" stroke-width="1.200"/></svg>
<svg class="b" style="left:1365.7px;top:618.5px;" width="13.5" height="11" viewBox="0 0 13.5 11"><path d="M8.800 6V8.800a1.200 1.200 0 0 1-1.200 1.200H1.800A1.200 1.200 0 0 1 .6 8.800V3.300a1.200 1.200 0 0 1 1.200-1.200H6.500" fill="none" stroke="#2a3348" stroke-width="1"/><path d="M4.600 5.600L10.200 .6L11.900 2.300L6.300 7.300L4.200 7.700Z" fill="#2a3348"/></svg>
<svg class="b" style="left:1391.7px;top:619px;" width="13" height="12" viewBox="0 0 13 12"><g fill="none" stroke="#2a3348" stroke-width="0.950"><path d="M0.300 0.800H2.300L4 8.300H11.500"/><path d="M2.600 2.300H12.300L11.500 6.500H3.700"/><path d="M3 4.400H12M5.500 2.300V6.500M8.300 2.300V6.500"/><path d="M4 8.300V9.300"/></g><rect x="4" y="9.800" width="1.600" height="1.500" fill="#2a3348"/><rect x="9.300" y="9.800" width="1.600" height="1.500" fill="#2a3348"/></svg>
<svg class="b" style="left:1419px;top:618.8px;" width="10" height="11.5" viewBox="0 0 10 11.5"><path d="M0.300 2.500H9.700M3.200 2.500V0.800H6.800V2.500" fill="none" stroke="#2a3348" stroke-width="0.950"/><path d="M1.400 2.800V10a0.800 0.800 0 0 0 .8.800H7.800a0.800 0.800 0 0 0 .8-.8V2.800" fill="none" stroke="#2a3348" stroke-width="0.950"/><path d="M3.500 4.500V9M5 4.500V9M6.500 4.500V9" stroke="#2a3348" stroke-width="0.700"/></svg>
<div class="b " style="left:1443px;top:611.5px;width:25px;height:25px;border-radius:50%;background:#e3e7ee;border:1px solid #c9cfd9;box-sizing:border-box;"></div>
<svg class="b" style="left:1452px;top:618px;" width="8" height="12" viewBox="0 0 8 12"><path d="M1.500 1.500L6 6L1.500 10.500" stroke="#f57c00" stroke-width="2.200" fill="none"/></svg>
<div class="b " style="left:665px;top:645px;width:817px;height:1px;background:#dfe3ea;"></div>
<div class="t " style="left:670.00px;top:657.000px;font-size:13px;line-height:19px;color:#252d42;letter-spacing:-0.100px;">6</div>
<div class="t " style="left:705.00px;top:658.000px;font-size:11px;line-height:16px;color:#252d42;letter-spacing:-0.154px;font-weight:700;">Joystick Development Board</div>
<svg class="b" style="left:856px;top:660.8px;" width="10" height="10" viewBox="0 0 12 12"><rect x="0" y="0" width="12" height="12" rx="2" fill="#252d42"/><path d="M4.700 2.600H9.400V7.300L7.900 5.800 4.300 9.400 2.600 7.700 6.200 4.100Z" fill="#fff"/></svg>
<svg class="b" style="left:1038px;top:660.3px;" width="13" height="12" viewBox="0 0 13 12"><g fill="#2a3348"><rect x="0.500" y="3" width="12" height="8.500" rx="1"/><path d="M4 3V1.200H9V3H7.800V2.300H5.200V3Z"/></g><path d="M3.500 9.500L8 5" stroke="#fff" stroke-width="1.300"/><circle cx="8.600" cy="4.600" r="1.400" fill="#fff"/><path d="M3 5L8 10" stroke="#fff" stroke-width="1.100"/></svg>
<div class="t " style="left:1052.00px;top:659.000px;font-size:11px;line-height:16px;color:#4a5265;letter-spacing:0.000px;">K</div>
<div class="t " style="left:1114.37px;top:657.000px;font-size:13px;line-height:19px;color:#252d42;letter-spacing:-0.100px;">1</div>
<svg class="b" style="left:1150px;top:660.3px;" width="11" height="12" viewBox="0 0 11 12"><path d="M1 0.600H6.500L9.500 3.600V11.400H1Z" fill="none" stroke="#2a3348" stroke-width="1"/><path d="M6.300 0.600V3.800H9.500" fill="none" stroke="#2a3348" stroke-width="0.900"/><path d="M2.500 8.500H5M2.500 6.500H4.500" stroke="#2a3348" stroke-width="0.800"/><path d="M6 9.800L8.500 7.200L7.500 10.200Z" fill="#2a3348"/><circle cx="8.800" cy="9" r="0.900" fill="#2a3348"/></svg>
<div class="t " style="left:1216.30px;top:657.000px;font-size:12.75px;line-height:19px;color:#252d42;letter-spacing:-0.383px;">388.16</div>
<svg class="b" style="left:1276.5px;top:661.8px;" width="14" height="9" viewBox="0 0 14 9"><path d="M0.500 1.800H6M0.500 4.500H6M0.500 7.200H6" stroke="#2a3348" stroke-width="1.100"/><path d="M10.200 1.500V7.500M7.200 4.500H13.200" stroke="#2a3348" stroke-width="1.200"/></svg>
<svg class="b" style="left:1365.7px;top:660.5px;" width="13.5" height="11" viewBox="0 0 13.5 11"><path d="M8.800 6V8.800a1.200 1.200 0 0 1-1.200 1.200H1.800A1.200 1.200 0 0 1 .6 8.800V3.300a1.200 1.200 0 0 1 1.200-1.200H6.500" fill="none" stroke="#2a3348" stroke-width="1"/><path d="M4.600 5.600L10.200 .6L11.900 2.300L6.300 7.300L4.200 7.700Z" fill="#2a3348"/></svg>
<svg class="b" style="left:1391.7px;top:661px;" width="13" height="12" viewBox="0 0 13 12"><g fill="none" stroke="#2a3348" stroke-width="0.950"><path d="M0.300 0.800H2.300L4 8.300H11.500"/><path d="M2.600 2.300H12.300L11.500 6.500H3.700"/><path d="M3 4.400H12M5.500 2.300V6.500M8.300 2.300V6.500"/><path d="M4 8.300V9.300"/></g><rect x="4" y="9.800" width="1.600" height="1.500" fill="#2a3348"/><rect x="9.300" y="9.800" width="1.600" height="1.500" fill="#2a3348"/></svg>
<svg class="b" style="left:1419px;top:660.8px;" width="10" height="11.5" viewBox="0 0 10 11.5"><path d="M0.300 2.500H9.700M3.200 2.500V0.800H6.800V2.500" fill="none" stroke="#2a3348" stroke-width="0.950"/><path d="M1.400 2.800V10a0.800 0.800 0 0 0 .8.800H7.800a0.800 0.800 0 0 0 .8-.8V2.800" fill="none" stroke="#2a3348" stroke-width="0.950"/><path d="M3.500 4.500V9M5 4.500V9M6.500 4.500V9" stroke="#2a3348" stroke-width="0.700"/></svg>
<div class="b " style="left:1443px;top:653.5px;width:25px;height:25px;border-radius:50%;background:#e3e7ee;border:1px solid #c9cfd9;box-sizing:border-box;"></div>
<svg class="b" style="left:1452px;top:660px;" width="8" height="12" viewBox="0 0 8 12"><path d="M1.500 1.500L6 6L1.500 10.500" stroke="#f57c00" stroke-width="2.200" fill="none"/></svg>
<div class="b " style="left:665px;top:686px;width:817px;height:1px;background:#dfe3ea;"></div>
<div class="b " style="left:1319px;top:504px;width:106px;height:27px;background:#f8f9fb;border-radius:4px;box-shadow:0 2px 4px rgba(0,0,0,0.350);"></div>
<svg class="b" style="left:1366px;top:530.5px;" width="12" height="7" viewBox="0 0 12 7"><path d="M0.500 0H11.500L6 6.500Z" fill="#f8f9fb"/></svg>
<div class="t " style="left:1325.20px;top:510.000px;font-size:12px;line-height:18px;color:#222b3d;letter-spacing:0.440px;">Change quantity</div>
<div class="b " style="left:662px;top:483px;width:828px;height:85px;border:3px solid #ff0000;box-sizing:border-box;"></div>
<svg class="b" style="left:681px;top:909.5px;" width="11" height="11" viewBox="0 0 11 11"><path d="M5.500 0.500V10.500M0.500 5.500H10.500" stroke="#1d2435" stroke-width="2.200"/></svg>
<div class="t " style="left:698.00px;top:906.000px;font-size:13px;line-height:19px;color:#252d42;letter-spacing:0.045px;">Add/remove extra cost</div>
<div class="t " style="left:1301.00px;top:907.000px;font-size:11px;line-height:16px;color:#333b4f;letter-spacing:0.012px;">Record 1 - 4 / 4</div>
<svg class="b" style="left:1393.5px;top:910.5px;" width="9" height="9" viewBox="0 0 9 9"><g fill="#d3d7de"><rect x="0.500" y="0.500" width="1.500" height="8"/><path d="M8 0.500V8.500L2.500 4.500Z"/></g></svg>
<svg class="b" style="left:1418.5px;top:910.5px;" width="9" height="9" viewBox="0 0 9 9"><g fill="#d3d7de"><path d="M7 0.500V8.500L1.500 4.500Z"/></g></svg>
<svg class="b" style="left:1441.5px;top:910.5px;" width="9" height="9" viewBox="0 0 9 9"><g fill="#d3d7de"><path d="M2 0.500V8.500L7.500 4.500Z"/></g></svg>
<svg class="b" style="left:1465.5px;top:910.5px;" width="9" height="9" viewBox="0 0 9 9"><g fill="#d3d7de"><rect x="7" y="0.500" width="1.500" height="8"/><path d="M1 0.500V8.500L6.500 4.500Z"/></g></svg>
<div class="t " style="left:1712.00px;top:74.000px;font-size:14px;line-height:20px;color:#252d42;letter-spacing:0.005px;font-weight:700;">CSO/103794</div>
<div class="b " style="left:1804px;top:73px;width:106px;height:22px;background:#cdd4de;border-radius:11px;"></div>
<div class="t " style="left:1814.00px;top:75.000px;font-size:12.75px;line-height:19px;color:#2a3348;letter-spacing:-0.404px;">Active service</div>
<div class="b bd" style="left:1890.8px;top:75.5px;width:17px;height:17px;border-radius:50%;background:#2089ef;color:#fff;font-size:11px;line-height:17px;">3</div>
<div class="b " style="left:1882.5px;top:54px;width:4px;height:4px;background:#0b0d12;border-radius:1px;"></div>
<div class="b " style="left:1888px;top:54px;width:4px;height:4px;background:#0b0d12;border-radius:1px;"></div>
<div class="b " style="left:1893.5px;top:54px;width:4px;height:4px;background:#0b0d12;border-radius:1px;"></div>
<div class="b " style="left:1500px;top:101.3px;width:400px;height:14px;overflow:hidden;"><div class="t" style="left:7px;top:-4.800px;font-size:12px;line-height:16px;color:#5d6679;letter-spacing:0.025px">Work order operation</div></div>
<svg class="b" style="left:1624.5px;top:99.9px;" width="10.2" height="10.2" viewBox="0 0 12 12"><rect x="0" y="0" width="12" height="12" rx="2" fill="#252d42"/><path d="M4.700 2.600H9.400V7.300L7.900 5.800 4.300 9.400 2.600 7.700 6.200 4.100Z" fill="#fff"/></svg>
<div class="t " style="left:1507.00px;top:115.000px;font-size:13px;line-height:19px;color:#252d42;letter-spacing:-0.413px;">124089 - SERVICE - Ready</div>
<div class="b " style="left:1507px;top:135px;width:365px;height:1px;background:#a9b1be;"></div>
<div class="b bd" style="left:1872.5px;top:115.5px;width:19px;height:19px;border-radius:50%;background:#2089ef;color:#fff;font-size:11px;line-height:19px;">3</div>
<div class="t " style="left:1507.00px;top:145.000px;font-size:12px;line-height:18px;color:#333b4f;letter-spacing:0.194px;">00:00</div>
<div class="t " style="left:1866.00px;top:145.000px;font-size:12px;line-height:18px;color:#333b4f;letter-spacing:0.194px;">01:00</div>
<div class="b " style="left:1507px;top:165.8px;width:391px;height:13px;border:1px solid #dde1e7;border-radius:4px;box-sizing:border-box;background:#f3f4f6;"></div>
<div class="b " style="left:1705px;top:187px;width:185px;height:33px;background:#fff;border-radius:4px;box-shadow:0 2px 5px rgba(0,0,0,0.220),0 0 1px rgba(0,0,0,0.150);"></div>
<div class="b " style="left:1705px;top:265px;width:185px;height:33px;background:#fff;border-radius:4px;box-shadow:0 2px 5px rgba(0,0,0,0.220),0 0 1px rgba(0,0,0,0.150);"></div>
<svg class="b" style="left:1572px;top:198px;" width="12" height="12" viewBox="0 0 12 12"><circle cx="6" cy="6" r="5.800" fill="#cfd3db"/><path d="M3.200 6.200L5.200 8.200L8.800 4.200" stroke="#f3f4f6" stroke-width="1.600" fill="none"/></svg>
<div class="t " style="left:1587.00px;top:196.000px;font-size:10.5px;line-height:16px;color:#cfd3db;letter-spacing:-0.370px;">SET READY</div>
<svg class="b" style="left:1781px;top:199px;" width="9" height="10" viewBox="0 0 9 10"><path d="M0.500 0.300L8.700 5L0.500 9.700Z" fill="#1d2435"/></svg>
<div class="t " style="left:1794.00px;top:196.000px;font-size:10.5px;line-height:16px;color:#1d2435;letter-spacing:-0.290px;">START</div>
<svg class="b" style="left:1585px;top:238px;" width="10" height="10" viewBox="0 0 10 10"><rect x="0.500" y="0" width="3.600" height="10" fill="#cfd3db"/><rect x="6" y="0" width="3.600" height="10" fill="#cfd3db"/></svg>
<div class="t " style="left:1598.50px;top:235.000px;font-size:10.5px;line-height:16px;color:#cfd3db;letter-spacing:-0.364px;">PAUSE</div>
<svg class="b" style="left:1769px;top:238.5px;" width="11" height="9" viewBox="0 0 11 9"><path d="M0.500 4.500H6M4 1.800L6.800 4.500L4 7.200" stroke="#cfd3db" stroke-width="1.300" fill="none"/><path d="M9.500 0.500V8.500" stroke="#cfd3db" stroke-width="1.500"/></svg>
<div class="t " style="left:1782.50px;top:235.000px;font-size:11px;line-height:16px;color:#cfd3db;letter-spacing:-0.306px;">CONTINUE</div>
<svg class="b" style="left:1574px;top:277px;" width="11" height="10" viewBox="0 0 11 10"><path d="M1 5.500L4 8.500L10 1.800" stroke="#cfd3db" stroke-width="2.200" fill="none"/></svg>
<div class="t " style="left:1587.50px;top:274.000px;font-size:10.5px;line-height:16px;color:#cfd3db;letter-spacing:-0.345px;">COMPLETE</div>
<svg class="b" style="left:1772px;top:276px;" width="10.5" height="12.5" viewBox="0 0 10.5 12.5"><g fill="#1d2435"><rect x="2.300" y="1.600" width="1.600" height="6" rx="0.800"/><rect x="4.200" y="0.400" width="1.600" height="7" rx="0.800"/><rect x="6.100" y="0.900" width="1.600" height="6.500" rx="0.800"/><rect x="8" y="2.300" width="1.600" height="5.500" rx="0.800"/><path d="M2.300 6H9.600V8.500C9.600 10.800 8.200 12.200 6 12.200 4.300 12.200 3.300 11.400 2.500 10L0.500 6.800C0.200 6.200 1 5.600 1.500 6.200L2.300 7.300Z"/></g></svg>
<div class="t " style="left:1785.00px;top:274.000px;font-size:11px;line-height:16px;color:#1d2435;letter-spacing:-0.017px;">ON HOLD</div>
<div class="t " style="left:1511.00px;top:306.000px;font-size:12px;line-height:18px;color:#3f475b;letter-spacing:0.080px;">Operator</div>
<div class="t " style="left:1511.00px;top:325.000px;font-size:13px;line-height:19px;color:#858c9b;letter-spacing:-0.078px;">Select operator</div>
<svg class="b" style="left:1677px;top:330.5px;" width="9" height="7" viewBox="0 0 9 7"><path d="M0.300 0.500H8.700L4.500 6.500Z" fill="#222b3d"/></svg>
<div class="b " style="left:1511px;top:345px;width:182px;height:0px;border-top:1px dashed #9aa3b2;"></div>
<svg class="b" style="left:1898.5px;top:334.5px;" width="9" height="9.5" viewBox="0 0 9 9.5"><path d="M1 1L4.500 4.200L8 1M1 5L4.500 8.200L8 5" stroke="#4d566a" stroke-width="1.200" fill="none"/></svg>
<div class="t " style="left:1502.00px;top:356.000px;font-size:14px;line-height:20px;color:#252d42;letter-spacing:-0.246px;font-weight:700;">Previous service parts</div>
<div class="b " style="left:1502px;top:377px;width:407px;height:2px;background:#f57c00;"></div>
<div class="b " style="left:1502px;top:379px;width:408px;height:421px;background:#fff;border-radius:0 0 4px 4px;"></div>
<div class="b " style="left:1510px;top:386px;width:339px;height:26px;background:#fff;border:1px solid #c8ccd3;border-radius:4px;box-sizing:border-box;"></div>
<div class="t " style="left:1518.20px;top:391.000px;font-size:13px;line-height:19px;color:#858c9b;letter-spacing:-0.157px;">Enter your search criteria here</div>
<svg class="b" style="left:1858.5px;top:393.9px;" width="13" height="13" viewBox="0 0 13 13"><path d="M0.500 0.800H12.500L7.800 6.300V12.500L5.200 10.800V6.300Z" fill="#222b3d"/></svg>
<svg class="b" style="left:1882.7px;top:392.6px;" width="15" height="15" viewBox="0 0 15 15"><polygon points="6.31,0.70 8.69,0.70 8.77,2.56 10.10,3.11 11.47,1.85 13.15,3.53 11.89,4.90 12.44,6.23 14.30,6.31 14.30,8.69 12.44,8.77 11.89,10.10 13.15,11.47 11.47,13.15 10.10,11.89 8.77,12.44 8.69,14.30 6.31,14.30 6.23,12.44 4.90,11.89 3.53,13.15 1.85,11.47 3.11,10.10 2.56,8.77 0.70,8.69 0.70,6.31 2.56,6.23 3.11,4.90 1.85,3.53 3.53,1.85 4.90,3.11 6.23,2.56" fill="#222b3d" stroke="#222b3d" stroke-width="0.800" stroke-linejoin="round"/><circle cx="7.500" cy="7.500" r="2.400" fill="#fff"/></svg>
<div class="t " style="left:1511.00px;top:428.000px;font-size:13px;line-height:19px;color:#252d42;letter-spacing:-0.073px;font-weight:700;">Part</div>
<div class="t " style="left:1818.00px;top:428.000px;font-size:12.75px;line-height:19px;color:#252d42;letter-spacing:-0.404px;font-weight:700;">Qua...</div>
<div class="b " style="left:1507px;top:449px;width:397px;height:1px;background:#c3cad5;"></div>
<div class="t " style="left:1502.00px;top:813.000px;font-size:13.75px;line-height:19px;color:#252d42;letter-spacing:-0.327px;font-weight:700;">Price</div>
<div class="b " style="left:1502px;top:833px;width:407px;height:2px;background:#f57c00;"></div>
<div class="t " style="left:1502.00px;top:845.000px;font-size:12px;line-height:18px;color:#4a5265;letter-spacing:-0.215px;">Service job</div>
<div class="t " style="left:1638.70px;top:845.000px;font-size:13px;line-height:19px;color:#252d42;letter-spacing:-0.100px;">4,286.97</div>
<div class="b " style="left:1502px;top:864px;width:192px;height:1px;background:#bcc3ce;"></div>
<div class="t " style="left:1705.00px;top:845.000px;font-size:12px;line-height:18px;color:#4a5265;letter-spacing:-0.004px;">Subtotal</div>
<div class="t " style="left:1852.84px;top:845.000px;font-size:13px;line-height:19px;color:#252d42;letter-spacing:-0.100px;">841.99</div>
<div class="b " style="left:1705.5px;top:864px;width:192px;height:1px;background:#bcc3ce;"></div>
<div class="t " style="left:1502.00px;top:868.000px;font-size:11.75px;line-height:17px;color:#4a5265;letter-spacing:-0.370px;">VAT</div>
<div class="t " style="left:1663.60px;top:868.000px;font-size:13px;line-height:19px;color:#252d42;letter-spacing:-0.100px;">0.00</div>
<div class="b " style="left:1502px;top:887px;width:192px;height:1px;background:#bcc3ce;"></div>
<div class="t " style="left:1705.00px;top:868.000px;font-size:13px;line-height:19px;color:#252d42;letter-spacing:-0.418px;font-weight:700;">Total</div>
<div class="t " style="left:1842.20px;top:868.000px;font-size:13px;line-height:19px;color:#252d42;letter-spacing:-0.100px;font-weight:700;">5,128.96</div>
<div class="b " style="left:1705.5px;top:887px;width:192px;height:1px;background:#bcc3ce;"></div>
</body></html>
